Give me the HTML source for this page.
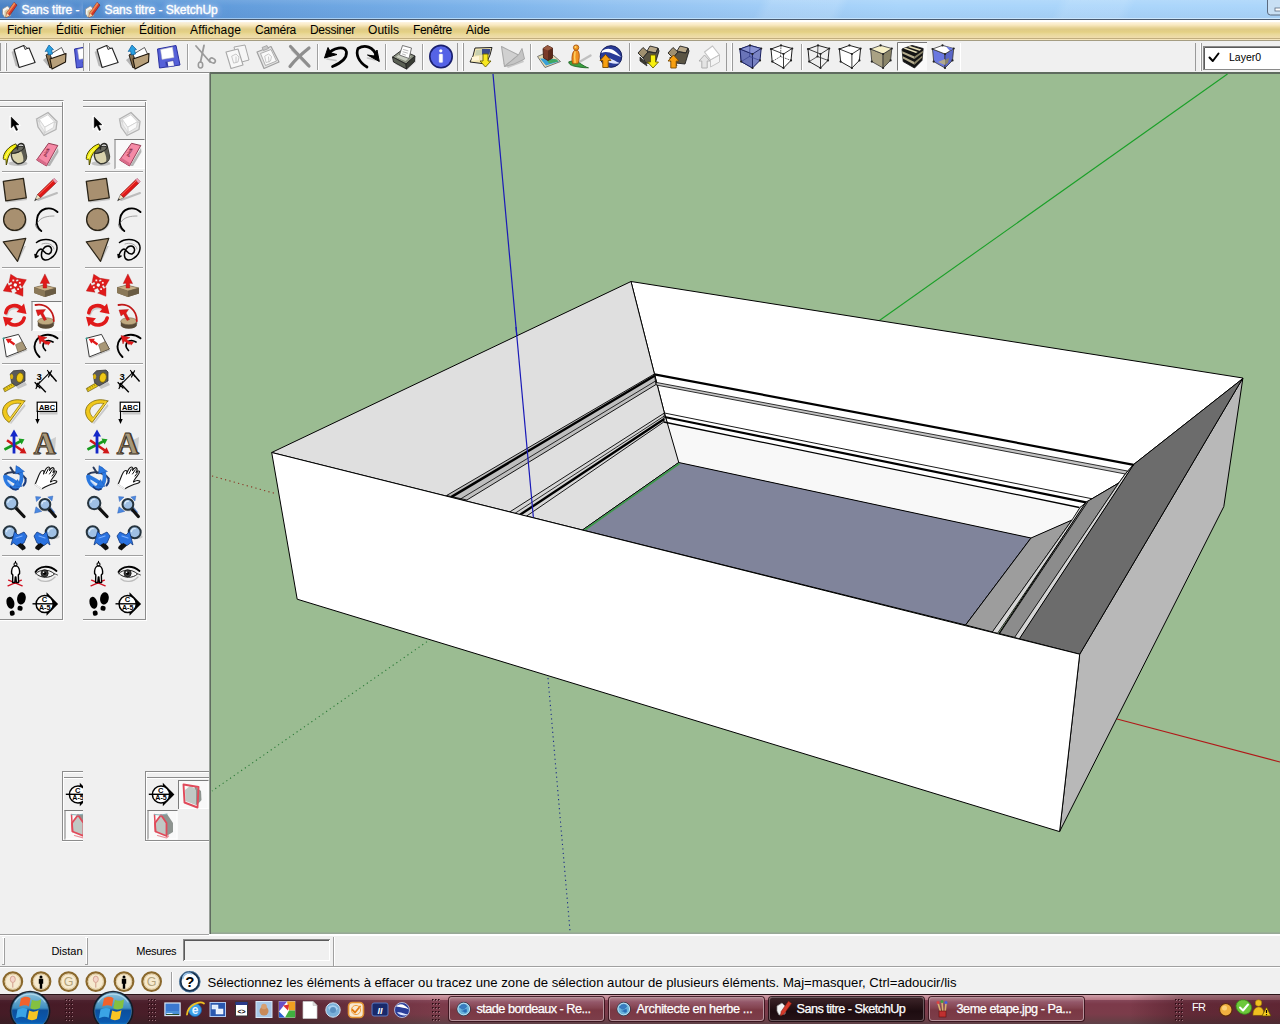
<!DOCTYPE html><html><head><meta charset="utf-8"><title>Sans titre - SketchUp</title><style>
html,body{margin:0;padding:0;}
body{width:1280px;height:1024px;overflow:hidden;position:relative;background:#f0f0f0;font-family:"Liberation Sans", "DejaVu Sans", sans-serif;font-size:12px;color:#000;}
.a{position:absolute;}
.t{position:absolute;white-space:nowrap;line-height:1;}
svg{position:absolute;overflow:visible;}
</style></head><body>
<svg width="1280" height="1024" viewBox="0 0 1280 1024" style="left:0;top:0"><rect x="209.4" y="72" width="1071" height="862" fill="#5f6b5f"/><rect x="211" y="74" width="1069" height="860" fill="#9bbc92"/><rect x="211" y="932.4" width="1069" height="1.6" fill="#98a997"/><line x1="1227.5" y1="74" x2="878" y2="321.5" stroke="#1aa028" stroke-width="1.1"/><line x1="493" y1="74" x2="533.5" y2="519" stroke="#1a1ab8" stroke-width="1.2"/><line x1="1117" y1="719" x2="1280" y2="762" stroke="#b01818" stroke-width="1.1"/><line x1="212" y1="476" x2="277" y2="494" stroke="#8a3020" stroke-width="1.1" stroke-dasharray="1.2 3.3"/><line x1="438" y1="634" x2="212" y2="791" stroke="#2a7a36" stroke-width="1.1" stroke-dasharray="1.2 3.3"/><line x1="548" y1="678" x2="570" y2="931" stroke="#1a2a8a" stroke-width="1.1" stroke-dasharray="1.2 3.3"/><polygon points="1079.7,654.2 1242.9,378 1223.8,506.6 1059.6,831.6" fill="#b8b8b8" stroke="#000" stroke-width="1" stroke-linejoin="round"/><polygon points="631,281.5 1242.9,378 1241,380 1133.75,464.4 1126,473 1118.75,483 1092,498.75 1080,507.5 1072,520 1031,538 678.75,462.5 664.4,413 654.4,373.8" fill="#ffffff" stroke="#000" stroke-width="1" stroke-linejoin="round"/><polygon points="663.75,422 1079.4,507.5 1072,520 1031,538 678.75,462.5" fill="#f8f8f8" stroke="none"/><polygon points="271.7,452.5 631,281.5 654.4,373.8 664.4,413 678.75,462.5 582.5,530" fill="#dfdfdf" stroke="#000" stroke-width="1" stroke-linejoin="round"/><polygon points="678.75,462.5 1031,538 965.6,625 582.5,530" fill="#80849b" stroke="#000" stroke-width="1" stroke-linejoin="round"/><polygon points="965.6,625 1031,538 1072,520 992.5,632" fill="#9d9d9d" stroke="#000" stroke-width="1" stroke-linejoin="round"/><polygon points="992.3,632 1072,520 1080,507.5 1086.5,502 997.6,633.2" fill="#d6d6d6" stroke="#000" stroke-width="0.8" stroke-linejoin="round"/><polygon points="999,633.5 1086,502 1092,498.75 1118.75,483 1015,637.5" fill="#8c8c8c" stroke="#000" stroke-width="1" stroke-linejoin="round"/><polygon points="1014.6,637.4 1118.75,483 1126,473 1133.75,464.4 1019.9,638.9" fill="#d6d6d6" stroke="#000" stroke-width="0.8" stroke-linejoin="round"/><polygon points="1019.4,638.75 1133.75,464.4 1241,380 1242.9,378 1079.7,654.2" fill="#6c6c6c" stroke="#000" stroke-width="1" stroke-linejoin="round"/><line x1="999.4" y1="633.8" x2="1088" y2="501.5" stroke="#000" stroke-width="0.9"/><line x1="679.5" y1="463.5" x2="584" y2="530.5" stroke="#3c9a4a" stroke-width="1.6"/><line x1="654.4" y1="374.3" x2="1133.75" y2="464.8" stroke="#000" stroke-width="2.2"/><polygon points="655.6,382.3 1127.5,471 1125.3,474 656.2,385" fill="#c4c4c4" stroke="#000" stroke-width="0.8"/><line x1="664.4" y1="413" x2="1092" y2="498.75" stroke="#000" stroke-width="0.9"/><line x1="664.6" y1="417" x2="1086" y2="502.3" stroke="#000" stroke-width="2.2"/><line x1="663.75" y1="422" x2="1079.4" y2="507.5" stroke="#000" stroke-width="1.3"/><polygon points="654.4,374 446.6,495.5 466.9,500 656,384.5" fill="#bebebe" stroke="#000" stroke-width="0.9"/><line x1="654.6" y1="375.7" x2="451.5" y2="496.9" stroke="#000" stroke-width="2.4"/><line x1="655.5" y1="381" x2="461" y2="498.7" stroke="#000" stroke-width="0.8"/><polygon points="664.4,413 509.8,511.9 526,516.5 663.75,422" fill="#d6d6d6" stroke="#000" stroke-width="0.9"/><line x1="664.3" y1="416" x2="515" y2="513.3" stroke="#000" stroke-width="0.8"/><line x1="664.2" y1="419" x2="520" y2="514.8" stroke="#000" stroke-width="2.4"/><line x1="516" y1="327" x2="533.5" y2="519" stroke="#1a1ab8" stroke-width="1.2"/><polygon points="271.7,452.5 297.2,599.2 1059.6,831.6 1079.7,654.2" fill="#ffffff" stroke="#000" stroke-width="1" stroke-linejoin="round"/></svg>
<div class="a" style="left:0px;top:0px;width:1280px;height:20px;background:linear-gradient(90deg,#4a82c6 0px,#548ed0 100px,#5f9ada 200px,#6aa3e0 300px,#74ace6 400px,#80b6ec 500px,#92c2f1 620px,#a0cdf7 760px,#a9d5fb 900px,#acd6fb 1280px);"></div><div class="a" style="left:0px;top:0px;width:1280px;height:18px;background:linear-gradient(180deg,rgba(255,255,255,.10) 0,rgba(255,255,255,0) 6px,rgba(0,20,80,.04) 17px);"></div><div class="a" style="left:0px;top:0px;width:1280px;height:18px;background:linear-gradient(115deg,rgba(255,255,255,0) 690px,rgba(255,255,255,.13) 700px,rgba(255,255,255,.13) 760px,rgba(255,255,255,0) 770px,rgba(255,255,255,0) 960px,rgba(255,255,255,.10) 970px,rgba(255,255,255,.10) 1020px,rgba(255,255,255,0) 1030px);"></div><div class="a" style="left:0px;top:18px;width:1280px;height:1px;background:linear-gradient(90deg,#8ab4e4 0,#b8dcfa 500px,#cfe8fd 1280px);"></div><div class="a" style="left:0px;top:19px;width:1280px;height:1px;background:#4a5a6e;"></div>
<div class="a" style="left:0px;top:20px;width:1280px;height:21px;background:linear-gradient(180deg,#ffffff 0,#ffffff 1.6px,#fdf3de 2.4px,#f8e8c0 5px,#e6d294 8px,#e0cc88 9.5px,#e4d084 12px,#e9d898 14px,#efdcaa 17.5px,#c2ae7e 18px,#c2ae7e 19px,#f6e6bc 19px,#f6e6bc 20px,#a59d82 20px,#a59d82 21px);"></div>
<div class="a" style="left:0px;top:72px;width:210px;height:1px;background:#8c8c8c;"></div><div class="a" style="left:0px;top:73px;width:209px;height:1px;background:#ffffff;"></div><div class="t" style="left:190px;top:23.6px;font-size:12px;letter-spacing:0.133px;">Affichage</div><div class="t" style="left:255px;top:23.6px;font-size:12px;letter-spacing:-0.283px;">Caméra</div><div class="t" style="left:310px;top:23.6px;font-size:12px;letter-spacing:-0.300px;">Dessiner</div><div class="t" style="left:368px;top:23.6px;font-size:12px;letter-spacing:0.050px;">Outils</div><div class="t" style="left:413px;top:23.6px;font-size:12px;letter-spacing:-0.343px;">Fenêtre</div><div class="t" style="left:466px;top:23.6px;font-size:12px;letter-spacing:0.000px;">Aide</div><svg width="1280" height="1024" viewBox="0 0 1280 1024" style="left:0;top:0"><line x1="187.5" y1="44" x2="187.5" y2="70" stroke="#a0a0a0" stroke-width="1" /><line x1="188.5" y1="44" x2="188.5" y2="70" stroke="#ffffff" stroke-width="1" /><path d="M196 46 L210 62" fill="none" stroke="#9a9a9a" stroke-width="1.8" stroke-linecap="round" stroke-linejoin="round" /><path d="M204 45.5 L200.5 62" fill="none" stroke="#9a9a9a" stroke-width="1.8" stroke-linecap="round" stroke-linejoin="round" /><ellipse cx="212.5" cy="60.5" rx="3" ry="2.2" fill="none" stroke="#9a9a9a" stroke-width="1.6" transform="rotate(30 212.5 60.5)"/><ellipse cx="200.5" cy="65" rx="2.2" ry="3" fill="none" stroke="#9a9a9a" stroke-width="1.6" /><polygon points="234,47 245,45 249,60 238,63" fill="#f6f6f6" stroke="#a8a8a8" stroke-width="1" stroke-linejoin="round" /><polygon points="226,52 238,49 243,65 231,68.5" fill="#f8f8f8" stroke="#a8a8a8" stroke-width="1.1" stroke-linejoin="round" /><path d="M232 56 l4 -2 l3 3 l-1 5 l-4 1 z M236 57 v5" fill="none" stroke="#bcbcbc" stroke-width="0.8" stroke-linecap="round" stroke-linejoin="round" /><polygon points="257,52 271,46.5 279,62 264,68.5" fill="#e4e4e4" stroke="#a0a0a0" stroke-width="1.2" stroke-linejoin="round" /><polygon points="260.5,53.5 271,49.5 276.5,61 265.5,65.5" fill="#fafafa" stroke="#a0a0a0" stroke-width="0.8" stroke-linejoin="round" /><polygon points="262,47.5 267,45.5 268.5,48.5 263.5,50.5" fill="#c8c8c8" stroke="#a0a0a0" stroke-width="0.8" stroke-linejoin="round" /><path d="M265 56 l3.5 -2 l3 2.5 l-1 4.5 l-4 1.5 z M268.5 57 l0.5 5" fill="none" stroke="#bcbcbc" stroke-width="0.8" stroke-linecap="round" stroke-linejoin="round" /><path d="M291.5 50 L307.5 66" fill="none" stroke="#c8c8c8" stroke-width="1.6" stroke-linecap="round" stroke-linejoin="round" /><path d="M290.5 46.5 C296.5 53 302.5 59 309 66" fill="none" stroke="#8e8e8e" stroke-width="3.2" stroke-linecap="round" stroke-linejoin="round" /><path d="M309 48 C301.5 54 295.5 59 290 66.5" fill="none" stroke="#8e8e8e" stroke-width="3.2" stroke-linecap="round" stroke-linejoin="round" /><line x1="317.5" y1="44" x2="317.5" y2="70" stroke="#a0a0a0" stroke-width="1" /><line x1="318.5" y1="44" x2="318.5" y2="70" stroke="#ffffff" stroke-width="1" /><path d="M327 59 L336 60.5" fill="none" stroke="#999" stroke-width="1.6" stroke-linecap="round" stroke-linejoin="round" opacity="0.5"/><path d="M332.5 66.5 C341 63 347 58 346.5 52 C345 45.5 333 47 327 55.5" fill="none" stroke="#000" stroke-width="2.7" stroke-linecap="round" stroke-linejoin="round" /><polygon points="324.5,58 328,47.5 331,53 337,54.5" fill="#000" stroke="#000" stroke-width="1" stroke-linejoin="round" /><path d="M367.5 58 L375.5 60" fill="none" stroke="#999" stroke-width="1.6" stroke-linecap="round" stroke-linejoin="round" opacity="0.5"/><path d="M367 67 C358.5 62 355.5 54 358 48.5 C364.5 44.5 373.5 46 377 57" fill="none" stroke="#000" stroke-width="2.7" stroke-linecap="round" stroke-linejoin="round" /><polygon points="379.3,61.5 377,50 374,56 367.5,55" fill="#000" stroke="#000" stroke-width="1" stroke-linejoin="round" /><line x1="385.5" y1="44" x2="385.5" y2="70" stroke="#a0a0a0" stroke-width="1" /><line x1="386.5" y1="44" x2="386.5" y2="70" stroke="#ffffff" stroke-width="1" /><polygon points="395,64 407,70 416,62 415,58" fill="#999" stroke="none" stroke-width="1" stroke-linejoin="round" opacity="0.4"/><polygon points="392.5,57 402,50 415,56 406,64" fill="#8e9484" stroke="#222" stroke-width="0.9" stroke-linejoin="round" /><polygon points="392.5,57 406,64 406.5,69 393.5,62" fill="#5a6054" stroke="#222" stroke-width="0.9" stroke-linejoin="round" /><polygon points="406,64 415,56 414.5,61.5 406.5,69" fill="#3a3e36" stroke="#222" stroke-width="0.9" stroke-linejoin="round" /><polygon points="396,57 402,52.5 411,56.5 405.5,61" fill="#c8ccc0" stroke="none" stroke-width="1" stroke-linejoin="round" /><polygon points="399.5,55 402.5,45.5 411.5,48 409,58.5" fill="#ffffff" stroke="#555" stroke-width="0.8" stroke-linejoin="round" /><path d="M403.5 49.5 l4.5 1.3 M403 51.8 l4.5 1.3 M402.5 54 l3 1" fill="none" stroke="#999" stroke-width="0.7" stroke-linecap="round" stroke-linejoin="round" /><line x1="422.5" y1="44" x2="422.5" y2="70" stroke="#a0a0a0" stroke-width="1" /><line x1="423.5" y1="44" x2="423.5" y2="70" stroke="#ffffff" stroke-width="1" /><circle cx="441" cy="56.6" r="11.2" fill="#5563e6" stroke="#1a2070" stroke-width="1.6" /><circle cx="440.8" cy="50.8" r="1.6" fill="#ffffff" stroke="none" stroke-width="1" /><rect x="439.1" y="54" width="3.6" height="8.5" fill="#ffffff" stroke="#dde" stroke-width="0.4" rx="0.8"/><line x1="457.5" y1="43" x2="457.5" y2="71" stroke="#9a9a9a" stroke-width="1" /><line x1="462.5" y1="43" x2="462.5" y2="71" stroke="#ffffff" stroke-width="1" /><line x1="463.5" y1="43" x2="463.5" y2="71" stroke="#9a9a9a" stroke-width="1" /><polygon points="475,48 492,47.5 490,55 486,64 470,62 473,56" fill="#f3e6b0" stroke="#222" stroke-width="1" stroke-linejoin="round" /><polygon points="482,49 490.5,49 489.5,54.5 482,54.5" fill="#3a4a8a" stroke="none" stroke-width="1" stroke-linejoin="round" /><polygon points="476,50 482,49.5 482,55 475,55.5" fill="#c8d0b0" stroke="none" stroke-width="1" stroke-linejoin="round" /><polygon points="472,57 479,56 479,60 471.5,61" fill="#fff6d8" stroke="none" stroke-width="1" stroke-linejoin="round" /><polygon points="483,54 488,54 488,61 491,61 485.5,67 480,61 483,61" fill="#f8e820" stroke="#6a6000" stroke-width="0.9" stroke-linejoin="round" /><polygon points="503,63 522,58 524,62 508,68" fill="#c8c8c8" stroke="none" stroke-width="1" stroke-linejoin="round" /><polygon points="501.5,46.5 518.5,55 504.5,66.5" fill="#d0d0d0" stroke="#a8a8a8" stroke-width="1.1" stroke-linejoin="round" /><polygon points="518.5,55 522,48.5 524.5,59 514,64 504.5,66.5" fill="#c4c4c4" stroke="#a8a8a8" stroke-width="1" stroke-linejoin="round" /><line x1="530.5" y1="44" x2="530.5" y2="70" stroke="#a0a0a0" stroke-width="1" /><line x1="531.5" y1="44" x2="531.5" y2="70" stroke="#ffffff" stroke-width="1" /><polygon points="537.5,56.5 549,51.5 560.5,61.5 545,67.5" fill="#e8dcb0" stroke="#666" stroke-width="0.9" stroke-linejoin="round" /><polygon points="540,58.5 546,65.5 559,61.5 555,59" fill="#38a0d8" stroke="none" stroke-width="1" stroke-linejoin="round" /><polygon points="546,59 557,59.5 558,61.5 549,63.5" fill="#40a860" stroke="none" stroke-width="1" stroke-linejoin="round" /><polygon points="543,48.5 547.5,45.5 552.5,48 552.5,58 548,60.5 543.5,58" fill="#7a3a28" stroke="#3a1a10" stroke-width="0.8" stroke-linejoin="round" /><polygon points="548,50.5 552.5,48 552.5,58 548,60.5" fill="#5a2a1c" stroke="none" stroke-width="1" stroke-linejoin="round" /><polygon points="543,48.5 547.5,45.5 552.5,48 548,50.5" fill="#9a5a40" stroke="none" stroke-width="1" stroke-linejoin="round" /><path d="M578.5 62.5 L590.5 55.5" fill="none" stroke="#999" stroke-width="2.4" stroke-linecap="round" stroke-linejoin="round" opacity="0.55"/><path d="M569 62 C571.5 60 576.5 61 579.5 63 C582.5 65 586.5 67.5 588.5 67.8 C584.5 68 577.5 67 573.5 66 C570.5 65 568.5 64 569 62 Z" fill="#3aa040" stroke="#1a6020" stroke-width="0.8" stroke-linecap="round" stroke-linejoin="round" /><path d="M572.5 63.5 C571.5 60 571.8 54 573.5 51.5 C574.7 49.5 577.7 49.5 578.5 51.5 C579.8 54 579.5 60 578 63.5 z" fill="#f09020" stroke="#a04a08" stroke-width="0.8" stroke-linecap="round" stroke-linejoin="round" /><circle cx="576.1" cy="47.6" r="2.7" fill="#f09820" stroke="#a04a08" stroke-width="0.8" /><path d="M575 52 C574.5 55 574.5 59 575.1 62.5" fill="none" stroke="#ffd060" stroke-width="1.5" stroke-linecap="round" stroke-linejoin="round" /><circle cx="575.5" cy="47" r="1" fill="#ffd870" stroke="none" stroke-width="1" /><circle cx="611" cy="56.5" r="10.8" fill="#2a3c98" stroke="#161e5a" stroke-width="1" /><path d="M602 51 C609 46 615 50 621 57 C615 55 608 50 601.5 53 z" fill="#ffffff" stroke="none" stroke-width="1" stroke-linecap="round" stroke-linejoin="round" /><path d="M605 58 C611 57 615 62 620 63 C615 65 609 62 604 62 z" fill="#dfe6ff" stroke="none" stroke-width="1" stroke-linecap="round" stroke-linejoin="round" /><polygon points="605.5,54.5 611,60.5 608.2,60.5 608.2,67.5 602.8,67.5 602.8,60.5 600,60.5" fill="#f8a010" stroke="#7a4a00" stroke-width="0.9" stroke-linejoin="round" /><line x1="629.5" y1="43" x2="629.5" y2="71" stroke="#9a9a9a" stroke-width="1" /><line x1="630.5" y1="43" x2="630.5" y2="71" stroke="#fff" stroke-width="1" /><polygon points="638,53 643,47.5 648,52 643,58" fill="#a09070" stroke="#222" stroke-width="0.9" stroke-linejoin="round" /><polygon points="647,51 650,46 658,48 656,53" fill="#b8a888" stroke="#222" stroke-width="0.9" stroke-linejoin="round" /><polygon points="643,58 648,52 656,53 658,48 659,51 655,64 646,63" fill="#5a5444" stroke="#222" stroke-width="0.9" stroke-linejoin="round" /><polygon points="640,57 646,63 647,66 640,61" fill="#3a3830" stroke="#222" stroke-width="0.7" stroke-linejoin="round" /><polygon points="650.5,55 655.5,55 655.5,62 658.5,62 653,68 647.5,62 650.5,62" fill="#f8f010" stroke="#6a6000" stroke-width="0.9" stroke-linejoin="round" /><polygon points="668,53 673,47.5 678,52 673,58" fill="#a09070" stroke="#222" stroke-width="0.9" stroke-linejoin="round" /><polygon points="677,51 680,46 688,48 686,53" fill="#b8a888" stroke="#222" stroke-width="0.9" stroke-linejoin="round" /><polygon points="673,58 678,52 686,53 688,48 689,51 685,64 676,63" fill="#5a5444" stroke="#222" stroke-width="0.9" stroke-linejoin="round" /><polygon points="670,57 676,63 677,66 670,61" fill="#3a3830" stroke="#222" stroke-width="0.7" stroke-linejoin="round" /><polygon points="673.5,55 679,61 676.2,61 676.2,68 670.8,68 670.8,61 668,61" fill="#f8a010" stroke="#7a4a00" stroke-width="0.9" stroke-linejoin="round" /><polygon points="704.5,52 712.5,46 719.5,55 710.5,60" fill="#ffffff" stroke="#c4c4c4" stroke-width="1.2" stroke-linejoin="round" /><polygon points="710.5,60 719.5,55 719.5,62 710.5,67" fill="#f4f4f4" stroke="#c4c4c4" stroke-width="1" stroke-linejoin="round" /><polygon points="704.5,55 710,61 707.2,61 707.2,68 701.8,68 701.8,61 699,61" fill="#e4e4e4" stroke="#b0b0b0" stroke-width="1" stroke-linejoin="round" /><line x1="726.5" y1="43" x2="726.5" y2="71" stroke="#9a9a9a" stroke-width="1" /><line x1="731.5" y1="43" x2="731.5" y2="71" stroke="#ffffff" stroke-width="1" /><line x1="732.5" y1="43" x2="732.5" y2="71" stroke="#9a9a9a" stroke-width="1" /><rect x="897.5" y="42.5" width="29.5" height="28" fill="#fafafa" stroke="none" stroke-width="1" /><line x1="897.5" y1="42.5" x2="927" y2="42.5" stroke="#777" stroke-width="1" /><line x1="897.5" y1="42.5" x2="897.5" y2="70.5" stroke="#777" stroke-width="1" /><polygon points="750,45.4 761.2,48.5 760,60.4 752.5,68 741.2,61.6 740,49" fill="#7a84c4" stroke="#1a2060" stroke-width="1" stroke-linejoin="round" /><polygon points="740,49 752.5,54 752.5,68 741.2,61.6" fill="#6a74b8" stroke="#1a2060" stroke-width="0.9" stroke-linejoin="round" /><polygon points="750,45.4 761.2,48.5 752.5,54 740,49" fill="#8a94d4" stroke="#1a2060" stroke-width="0.9" stroke-linejoin="round" /><path d="M749.5 56.5 L750 45.4 M749.5 56.5 L741.2 61.6 M749.5 56.5 L760 60.4" fill="none" stroke="#3a4490" stroke-width="0.7" stroke-linecap="round" stroke-linejoin="round" /><circle cx="750" cy="45.4" r="1.1" fill="#222" stroke="none" stroke-width="1" /><circle cx="740" cy="49" r="1.1" fill="#222" stroke="none" stroke-width="1" /><circle cx="761.2" cy="48.5" r="1.1" fill="#222" stroke="none" stroke-width="1" /><circle cx="752.5" cy="54" r="1.1" fill="#222" stroke="none" stroke-width="1" /><circle cx="752.5" cy="68" r="1.1" fill="#222" stroke="none" stroke-width="1" /><circle cx="741.2" cy="61.6" r="1.1" fill="#222" stroke="none" stroke-width="1" /><circle cx="760" cy="60.4" r="1.1" fill="#222" stroke="none" stroke-width="1" /><polygon points="781,45.4 792.2,48.5 791,60.4 783.5,68 772.2,61.6 771,49" fill="#ffffff" stroke="#222" stroke-width="1" stroke-linejoin="round" /><path d="M771 49 L783.5 54 L792.2 48.5 M783.5 54 L783.5 68" fill="none" stroke="#222" stroke-width="0.9" stroke-linecap="round" stroke-linejoin="round" /><path d="M780.5 56.5 L781 45.4 M780.5 56.5 L772.2 61.6 M780.5 56.5 L791 60.4" fill="none" stroke="#444" stroke-width="0.8" stroke-linecap="round" stroke-linejoin="round" stroke-dasharray="1 1.6"/><circle cx="781" cy="45.4" r="1.1" fill="#222" stroke="none" stroke-width="1" /><circle cx="771" cy="49" r="1.1" fill="#222" stroke="none" stroke-width="1" /><circle cx="792.2" cy="48.5" r="1.1" fill="#222" stroke="none" stroke-width="1" /><circle cx="783.5" cy="54" r="1.1" fill="#222" stroke="none" stroke-width="1" /><circle cx="783.5" cy="68" r="1.1" fill="#222" stroke="none" stroke-width="1" /><circle cx="772.2" cy="61.6" r="1.1" fill="#222" stroke="none" stroke-width="1" /><circle cx="791" cy="60.4" r="1.1" fill="#222" stroke="none" stroke-width="1" /><line x1="801.5" y1="44" x2="801.5" y2="70" stroke="#a0a0a0" stroke-width="1" /><line x1="802.5" y1="44" x2="802.5" y2="70" stroke="#ffffff" stroke-width="1" /><polygon points="818,45.4 829.2,48.5 828,60.4 820.5,68 809.2,61.6 808,49" fill="none" stroke="#222" stroke-width="1" stroke-linejoin="round" /><path d="M808 49 L820.5 54 L829.2 48.5 M820.5 54 L820.5 68" fill="none" stroke="#222" stroke-width="0.9" stroke-linecap="round" stroke-linejoin="round" /><path d="M817.5 56.5 L818 45.4 M817.5 56.5 L809.2 61.6 M817.5 56.5 L828 60.4" fill="none" stroke="#333" stroke-width="0.8" stroke-linecap="round" stroke-linejoin="round" /><circle cx="818" cy="45.4" r="1.1" fill="#222" stroke="none" stroke-width="1" /><circle cx="808" cy="49" r="1.1" fill="#222" stroke="none" stroke-width="1" /><circle cx="829.2" cy="48.5" r="1.1" fill="#222" stroke="none" stroke-width="1" /><circle cx="820.5" cy="54" r="1.1" fill="#222" stroke="none" stroke-width="1" /><circle cx="820.5" cy="68" r="1.1" fill="#222" stroke="none" stroke-width="1" /><circle cx="809.2" cy="61.6" r="1.1" fill="#222" stroke="none" stroke-width="1" /><circle cx="828" cy="60.4" r="1.1" fill="#222" stroke="none" stroke-width="1" /><circle cx="817.5" cy="56.5" r="1.1" fill="#222" stroke="none" stroke-width="1" /><polygon points="849.4,45.4 860.6,48.5 859.4,60.4 851.9,68 840.6,61.6 839.4,49" fill="#ffffff" stroke="#222" stroke-width="1" stroke-linejoin="round" /><path d="M839.4 49 L851.9 54 L860.6 48.5 M851.9 54 L851.9 68" fill="none" stroke="#222" stroke-width="0.9" stroke-linecap="round" stroke-linejoin="round" /><circle cx="849.4" cy="45.4" r="1.1" fill="#222" stroke="none" stroke-width="1" /><circle cx="839.4" cy="49" r="1.1" fill="#222" stroke="none" stroke-width="1" /><circle cx="860.6" cy="48.5" r="1.1" fill="#222" stroke="none" stroke-width="1" /><circle cx="851.9" cy="54" r="1.1" fill="#222" stroke="none" stroke-width="1" /><circle cx="851.9" cy="68" r="1.1" fill="#222" stroke="none" stroke-width="1" /><circle cx="840.6" cy="61.6" r="1.1" fill="#222" stroke="none" stroke-width="1" /><circle cx="859.4" cy="60.4" r="1.1" fill="#222" stroke="none" stroke-width="1" /><polygon points="870.6,49 883.1,54 883.1,68 871.8,61.6" fill="#aaa284" stroke="#333" stroke-width="0.8" stroke-linejoin="round" /><polygon points="883.1,54 891.8,48.5 890.6,60.4 883.1,68" fill="#8a8468" stroke="#333" stroke-width="0.8" stroke-linejoin="round" /><polygon points="880.6,45.4 891.8,48.5 883.1,54 870.6,49" fill="#f6efc6" stroke="#333" stroke-width="0.8" stroke-linejoin="round" /><circle cx="880.6" cy="45.4" r="1.1" fill="#222" stroke="none" stroke-width="1" /><circle cx="870.6" cy="49" r="1.1" fill="#222" stroke="none" stroke-width="1" /><circle cx="891.8" cy="48.5" r="1.1" fill="#222" stroke="none" stroke-width="1" /><circle cx="883.1" cy="54" r="1.1" fill="#222" stroke="none" stroke-width="1" /><circle cx="883.1" cy="68" r="1.1" fill="#222" stroke="none" stroke-width="1" /><circle cx="871.8" cy="61.6" r="1.1" fill="#222" stroke="none" stroke-width="1" /><circle cx="890.6" cy="60.4" r="1.1" fill="#222" stroke="none" stroke-width="1" /><polygon points="912,45.4 923.2,48.5 922,60.4 914.5,68 903.2,61.6 902,49" fill="#141414" stroke="#111" stroke-width="0.8" stroke-linejoin="round" /><polygon points="902.216,51.268 914.5,56.52 914.5,59.04 902.432,53.536" fill="#b4ac8e" stroke="none" stroke-width="1" stroke-linejoin="round" /><polygon points="914.5,56.52 922.984,50.642 922.768,52.784 914.5,59.04" fill="#8a8468" stroke="none" stroke-width="1" stroke-linejoin="round" /><polygon points="902.696,56.308 914.5,62.12 914.5,64.64 902.912,58.576" fill="#b4ac8e" stroke="none" stroke-width="1" stroke-linejoin="round" /><polygon points="914.5,62.12 922.504,55.402 922.288,57.544 914.5,64.64" fill="#8a8468" stroke="none" stroke-width="1" stroke-linejoin="round" /><polygon points="910,46.12 921.46,49.6 919.546,50.81 907.8,46.912" fill="#e6dfb8" stroke="none" stroke-width="1" stroke-linejoin="round" /><polygon points="905.8,47.632 917.806,51.91 915.892,53.12 903.6,48.424" fill="#e6dfb8" stroke="none" stroke-width="1" stroke-linejoin="round" /><polygon points="932.5,49 945,54 945,68 933.7,61.6" fill="#6a78e0" stroke="#333" stroke-width="0.8" stroke-linejoin="round" /><polygon points="945,54 953.7,48.5 952.5,60.4 945,68" fill="#5a66c8" stroke="#333" stroke-width="0.8" stroke-linejoin="round" /><polygon points="942.5,45.4 953.7,48.5 945,54 932.5,49" fill="#ffffff" stroke="#333" stroke-width="0.8" stroke-linejoin="round" /><polygon points="942.5,45.4 953.7,48.5 949.7,50.7 945.5,46" fill="#6a78e0" stroke="none" stroke-width="1" stroke-linejoin="round" /><polygon points="938,62 945,59 945,65 940,63" fill="#b0a890" stroke="none" stroke-width="1" stroke-linejoin="round" /><polygon points="945,60 949,58 948,63 945,65" fill="#8a8468" stroke="none" stroke-width="1" stroke-linejoin="round" /><circle cx="942.5" cy="45.4" r="1.1" fill="#222" stroke="none" stroke-width="1" /><circle cx="932.5" cy="49" r="1.1" fill="#222" stroke="none" stroke-width="1" /><circle cx="953.7" cy="48.5" r="1.1" fill="#222" stroke="none" stroke-width="1" /><circle cx="945" cy="54" r="1.1" fill="#222" stroke="none" stroke-width="1" /><circle cx="945" cy="68" r="1.1" fill="#222" stroke="none" stroke-width="1" /><circle cx="933.7" cy="61.6" r="1.1" fill="#222" stroke="none" stroke-width="1" /><circle cx="952.5" cy="60.4" r="1.1" fill="#222" stroke="none" stroke-width="1" /><line x1="960.5" y1="43" x2="960.5" y2="71" stroke="#ffffff" stroke-width="1" /><line x1="1195.5" y1="43" x2="1195.5" y2="71" stroke="#9a9a9a" stroke-width="1" /><line x1="1200.5" y1="43" x2="1200.5" y2="71" stroke="#ffffff" stroke-width="1" /><line x1="1201.5" y1="43" x2="1201.5" y2="71" stroke="#9a9a9a" stroke-width="1" /><rect x="1203.5" y="46.5" width="80" height="23" fill="#ffffff" stroke="#8a8a8a" stroke-width="1" /><line x1="1204.5" y1="47.5" x2="1280" y2="47.5" stroke="#5a5a5a" stroke-width="1" /><line x1="1204.5" y1="47.5" x2="1204.5" y2="69" stroke="#5a5a5a" stroke-width="1" /><path d="M1209.5 57.5 L1212.8 61 L1218.5 53.5" fill="none" stroke="#000" stroke-width="2" stroke-linecap="round" stroke-linejoin="round" /><rect x="1267.5" y="-3" width="16" height="18" fill="#c8dff4" stroke="#5a6a80" stroke-width="1" rx="3"/><rect x="1275" y="8" width="8" height="3" fill="#ffffff" stroke="#5a6a80" stroke-width="0.8" /></svg><div class="t" style="left:1229px;top:51.5px;font-size:10.5px;">Layer0</div><div class="a" style="left:0px;top:934px;width:209px;height:1px;background:#a4a4a4;"></div><div class="a" style="left:0px;top:935px;width:209px;height:1px;background:#ffffff;"></div><div class="a" style="left:209px;top:934px;width:1071px;height:2px;background:#ffffff;"></div><div class="a" style="left:0px;top:966px;width:1280px;height:1px;background:#a0a0a0;"></div><div class="a" style="left:0px;top:967px;width:1280px;height:1px;background:#ffffff;"></div><div class="a" style="left:0px;top:994px;width:1280px;height:30px;background:linear-gradient(180deg,#2a1418 0,#2a1418 1px,#d0a0aa 1px,#b87a86 5.5px,#86485a 6px,#7c3a4a 10px,#7b3c4a 20px,#6a3e46 26px,#5e4248 30px);"></div><div class="a" style="left:0px;top:995px;width:1280px;height:29px;background:linear-gradient(90deg,rgba(25,0,8,.55) 0,rgba(25,0,8,.5) 160px,rgba(25,0,8,.32) 300px,rgba(25,0,8,0) 440px,rgba(25,0,8,0) 1130px,rgba(40,0,10,.3) 1180px,rgba(40,0,10,.35) 1280px);"></div><div class="a" style="left:448.5px;top:996.5px;width:155px;height:24.5px;background:linear-gradient(180deg,#ae808a 0,#94586a 18%,#844450 45%,#7a3844 55%,#7c3e4a 100%);border:1px solid #b8949c;border-radius:3px;box-sizing:border-box;box-shadow:0 0 0 1px rgba(50,15,25,.85);"></div><div class="t" style="left:476.5px;top:1003.2px;color:#fff;font-size:12.7px;letter-spacing:-0.528px;-webkit-text-stroke:0.25px #fff;">stade bordeaux - Re...</div><div class="a" style="left:608.5px;top:996.5px;width:155px;height:24.5px;background:linear-gradient(180deg,#ae808a 0,#94586a 18%,#844450 45%,#7a3844 55%,#7c3e4a 100%);border:1px solid #b8949c;border-radius:3px;box-sizing:border-box;box-shadow:0 0 0 1px rgba(50,15,25,.85);"></div><div class="t" style="left:636.5px;top:1003.2px;color:#fff;font-size:12.7px;letter-spacing:-0.359px;-webkit-text-stroke:0.25px #fff;">Architecte en herbe ...</div><div class="a" style="left:768.5px;top:996.5px;width:155px;height:24.5px;background:linear-gradient(180deg,#3c2429 0,#2a1519 35%,#1d0c10 60%,#241216 100%);border:1px solid #6a5a5e;border-radius:3px;box-sizing:border-box;box-shadow:0 0 0 1px rgba(20,5,10,.8);"></div><div class="t" style="left:796.5px;top:1003.2px;color:#fff;font-size:12.7px;letter-spacing:-0.525px;-webkit-text-stroke:0.25px #fff;">Sans titre - SketchUp</div><div class="a" style="left:928.5px;top:996.5px;width:155px;height:24.5px;background:linear-gradient(180deg,#ae808a 0,#94586a 18%,#844450 45%,#7a3844 55%,#7c3e4a 100%);border:1px solid #b8949c;border-radius:3px;box-sizing:border-box;box-shadow:0 0 0 1px rgba(50,15,25,.85);"></div><div class="t" style="left:956.5px;top:1003.2px;color:#fff;font-size:12.7px;letter-spacing:-0.454px;-webkit-text-stroke:0.25px #fff;">3eme etape.jpg - Pa...</div><div class="t" style="left:1192px;top:1001.5px;color:#fff;font-size:11px;letter-spacing:-0.6px;">FR</div><div class="t" style="left:207.5px;top:975.6px;font-size:13.14px;">Sélectionnez les éléments à effacer ou tracez une zone de sélection autour de plusieurs éléments. Maj=masquer, Ctrl=adoucir/lis</div><svg width="1280" height="1024" viewBox="0 0 1280 1024" style="left:0;top:0"><line x1="171.5" y1="972" x2="171.5" y2="992" stroke="#a0a0a0" stroke-width="1" /><line x1="172.5" y1="972" x2="172.5" y2="992" stroke="#fff" stroke-width="1" /><circle cx="189.8" cy="981.7" r="9.4" fill="#ffffff" stroke="#17324e" stroke-width="2.4" /><circle cx="189.8" cy="981.7" r="10.4" fill="none" stroke="#6a9ac8" stroke-width="0.6" /><path d="M182.8 978.7 A6 6 0 0 1 191.8 973.9" fill="none" stroke="#9cc4e8" stroke-width="1.6" stroke-linecap="round" stroke-linejoin="round" /><text x="189.8" y="986.9" font-size="15" font-family="Liberation Sans, DejaVu Sans, sans-serif" text-anchor="middle" font-weight="bold">?</text><line x1="333.5" y1="937" x2="333.5" y2="966" stroke="#a0a0a0" stroke-width="1" /><line x1="334.5" y1="937" x2="334.5" y2="966" stroke="#fff" stroke-width="1" /><rect x="183.5" y="939.5" width="146" height="21" fill="#f0f0f0" stroke="#8a8a8a" stroke-width="1" /><line x1="184" y1="940.5" x2="329" y2="940.5" stroke="#5a5a5a" stroke-width="1" /><line x1="184.5" y1="940" x2="184.5" y2="960" stroke="#5a5a5a" stroke-width="1" /><line x1="184" y1="960.5" x2="330" y2="960.5" stroke="#fff" stroke-width="1" /><line x1="329.5" y1="940" x2="329.5" y2="961" stroke="#fff" stroke-width="1" /><g transform="translate(0,1.5)" ><rect x="164.9" y="1001.5" width="15.2" height="12.6" fill="#3a78d0" stroke="#d8e4f4" stroke-width="1.2" /><rect x="166" y="1009.5" width="13" height="3.6" fill="#4a90d8" stroke="none" stroke-width="1" /><rect x="166.5" y="1011.5" width="6" height="1.2" fill="#d0e8ff" stroke="none" stroke-width="1" /><rect x="166" y="1012.5" width="13" height="1" fill="#2a4a2a" stroke="none" stroke-width="1" /><circle cx="195" cy="1008.5" r="6.5" fill="#3aa0e8" stroke="#1a5aa8" stroke-width="0.8" /><text x="195" y="1012.6" font-size="12" font-family="Liberation Sans, DejaVu Sans, sans-serif" text-anchor="middle" fill="#e8f4ff" font-weight="bold">e</text><path d="M187 1013 C188 1003 200 999 204 1002" fill="none" stroke="#f0c020" stroke-width="1.8" stroke-linecap="round" stroke-linejoin="round" /><rect x="210" y="1001" width="15.5" height="14" fill="#2a58b0" stroke="#b0c8f0" stroke-width="1" /><rect x="212" y="1003.5" width="6" height="4" fill="#d8e8ff" stroke="#fff" stroke-width="0.5" /><rect x="216" y="1007.5" width="7" height="5" fill="#e8f0ff" stroke="#fff" stroke-width="0.5" /><rect x="235.5" y="1000.5" width="12" height="14" fill="#ffffff" stroke="#333" stroke-width="1" /><rect x="235.5" y="1000.5" width="12" height="3" fill="#2a3a8a" stroke="none" stroke-width="1" /><text x="241.5" y="1012" font-size="7" font-family="Liberation Sans, DejaVu Sans, sans-serif" text-anchor="middle" font-weight="bold">&lt;&gt;</text><rect x="256" y="1000" width="16" height="16" fill="#a8c8e8" stroke="#d8e8f8" stroke-width="1" /><circle cx="264" cy="1009.5" r="4.5" fill="#c88a5a" stroke="none" stroke-width="1" /><circle cx="264" cy="1005" r="2.8" fill="#d8a070" stroke="none" stroke-width="1" /><rect x="279" y="1000" width="16" height="16" fill="#ffffff" stroke="#ddd" stroke-width="0.6" /><polygon points="279,1000 287,1000 279,1010" fill="#6a50c8" stroke="none" stroke-width="1" stroke-linejoin="round" /><polygon points="287,1000 295,1000 295,1009 289,1009" fill="#f0a020" stroke="none" stroke-width="1" stroke-linejoin="round" /><polygon points="289,1009 295,1009 295,1016 285,1016" fill="#40b040" stroke="none" stroke-width="1" stroke-linejoin="round" /><polygon points="279,1010 285,1016 279,1016" fill="#2a60d0" stroke="none" stroke-width="1" stroke-linejoin="round" /><polygon points="283,1004 289,1003 288,1009" fill="#e03030" stroke="none" stroke-width="1" stroke-linejoin="round" /><polygon points="303,1000 313,1000 317,1004 317,1017 303,1017" fill="#ffffff" stroke="#ccc" stroke-width="0.7" stroke-linejoin="round" /><polygon points="313,1000 313,1004 317,1004" fill="#ddd" stroke="#bbb" stroke-width="0.5" stroke-linejoin="round" /><circle cx="333" cy="1008.5" r="7.2" fill="#7ab0d8" stroke="#d0e0f0" stroke-width="1" /><path d="M328 1006 c3 -3 7 -3 10 1 c-2 3 -7 5 -10 -1z" fill="#a8d0f0" stroke="none" stroke-width="1" stroke-linecap="round" stroke-linejoin="round" /><circle cx="333" cy="1008.5" r="3" fill="#5a90c0" stroke="none" stroke-width="1" /><rect x="348.5" y="1001" width="15" height="15" fill="#f8e8d0" stroke="#e09030" stroke-width="1.6" rx="4"/><path d="M352 1008 l3 3 l5 -6" fill="none" stroke="#e07a10" stroke-width="1.8" stroke-linecap="round" stroke-linejoin="round" /><circle cx="356" cy="1008.5" r="4.6" fill="none" stroke="#f0a040" stroke-width="1" /><rect x="372" y="1001.5" width="16" height="13" fill="#1a2a6a" stroke="#5a78c0" stroke-width="1" rx="2"/><text x="380" y="1012" font-size="9" font-family="Liberation Sans, DejaVu Sans, sans-serif" text-anchor="middle" fill="#fff" font-weight="bold" font-style="italic">II</text><circle cx="402" cy="1008.5" r="7.5" fill="#2a3c98" stroke="#c8d0e8" stroke-width="0.8" /><path d="M396 1005 c4 -4 9 -2 13 3 c-4 -2 -8 -2 -13 -3z" fill="#fff" stroke="none" stroke-width="1" stroke-linecap="round" stroke-linejoin="round" /><path d="M397 1011 c4 -1 7 2 11 2 c-3 2 -8 1 -11 -2z" fill="#dfe6ff" stroke="none" stroke-width="1" stroke-linecap="round" stroke-linejoin="round" /></g><rect x="432" y="999" width="1.7" height="1.7" fill="#2a0c14" stroke="none" stroke-width="1" /><rect x="432.9" y="999.9" width="1" height="1" fill="#b88a94" stroke="none" stroke-width="1" /><rect x="435" y="999" width="1.7" height="1.7" fill="#2a0c14" stroke="none" stroke-width="1" /><rect x="435.9" y="999.9" width="1" height="1" fill="#b88a94" stroke="none" stroke-width="1" /><rect x="438" y="999" width="1.7" height="1.7" fill="#2a0c14" stroke="none" stroke-width="1" /><rect x="438.9" y="999.9" width="1" height="1" fill="#b88a94" stroke="none" stroke-width="1" /><rect x="432" y="1003" width="1.7" height="1.7" fill="#2a0c14" stroke="none" stroke-width="1" /><rect x="432.9" y="1003.9" width="1" height="1" fill="#b88a94" stroke="none" stroke-width="1" /><rect x="435" y="1003" width="1.7" height="1.7" fill="#2a0c14" stroke="none" stroke-width="1" /><rect x="435.9" y="1003.9" width="1" height="1" fill="#b88a94" stroke="none" stroke-width="1" /><rect x="438" y="1003" width="1.7" height="1.7" fill="#2a0c14" stroke="none" stroke-width="1" /><rect x="438.9" y="1003.9" width="1" height="1" fill="#b88a94" stroke="none" stroke-width="1" /><rect x="432" y="1007" width="1.7" height="1.7" fill="#2a0c14" stroke="none" stroke-width="1" /><rect x="432.9" y="1007.9" width="1" height="1" fill="#b88a94" stroke="none" stroke-width="1" /><rect x="435" y="1007" width="1.7" height="1.7" fill="#2a0c14" stroke="none" stroke-width="1" /><rect x="435.9" y="1007.9" width="1" height="1" fill="#b88a94" stroke="none" stroke-width="1" /><rect x="438" y="1007" width="1.7" height="1.7" fill="#2a0c14" stroke="none" stroke-width="1" /><rect x="438.9" y="1007.9" width="1" height="1" fill="#b88a94" stroke="none" stroke-width="1" /><rect x="432" y="1011" width="1.7" height="1.7" fill="#2a0c14" stroke="none" stroke-width="1" /><rect x="432.9" y="1011.9" width="1" height="1" fill="#b88a94" stroke="none" stroke-width="1" /><rect x="435" y="1011" width="1.7" height="1.7" fill="#2a0c14" stroke="none" stroke-width="1" /><rect x="435.9" y="1011.9" width="1" height="1" fill="#b88a94" stroke="none" stroke-width="1" /><rect x="438" y="1011" width="1.7" height="1.7" fill="#2a0c14" stroke="none" stroke-width="1" /><rect x="438.9" y="1011.9" width="1" height="1" fill="#b88a94" stroke="none" stroke-width="1" /><rect x="432" y="1015" width="1.7" height="1.7" fill="#2a0c14" stroke="none" stroke-width="1" /><rect x="432.9" y="1015.9" width="1" height="1" fill="#b88a94" stroke="none" stroke-width="1" /><rect x="435" y="1015" width="1.7" height="1.7" fill="#2a0c14" stroke="none" stroke-width="1" /><rect x="435.9" y="1015.9" width="1" height="1" fill="#b88a94" stroke="none" stroke-width="1" /><rect x="438" y="1015" width="1.7" height="1.7" fill="#2a0c14" stroke="none" stroke-width="1" /><rect x="438.9" y="1015.9" width="1" height="1" fill="#b88a94" stroke="none" stroke-width="1" /><rect x="432" y="1019" width="1.7" height="1.7" fill="#2a0c14" stroke="none" stroke-width="1" /><rect x="432.9" y="1019.9" width="1" height="1" fill="#b88a94" stroke="none" stroke-width="1" /><rect x="435" y="1019" width="1.7" height="1.7" fill="#2a0c14" stroke="none" stroke-width="1" /><rect x="435.9" y="1019.9" width="1" height="1" fill="#b88a94" stroke="none" stroke-width="1" /><rect x="438" y="1019" width="1.7" height="1.7" fill="#2a0c14" stroke="none" stroke-width="1" /><rect x="438.9" y="1019.9" width="1" height="1" fill="#b88a94" stroke="none" stroke-width="1" /><circle cx="463.7" cy="1009" r="6.6" fill="#6ab4dc" stroke="#1c2c3c" stroke-width="0.9" /><circle cx="463.7" cy="1009" r="5.9" fill="none" stroke="#c4e4f6" stroke-width="1" /><path d="M459.7 1007 c2 -3 5 -3 7 -1 c-1 3 -5 5 -7 1z M461.7 1011 c2 1 4 0 5 -2" fill="#3a7cc0" stroke="#2a6ab0" stroke-width="0.6" stroke-linecap="round" stroke-linejoin="round" /><circle cx="465.2" cy="1011" r="1.8" fill="#2a70b8" stroke="none" stroke-width="1" /><circle cx="623.7" cy="1009" r="6.6" fill="#6ab4dc" stroke="#1c2c3c" stroke-width="0.9" /><circle cx="623.7" cy="1009" r="5.9" fill="none" stroke="#c4e4f6" stroke-width="1" /><path d="M619.7 1007 c2 -3 5 -3 7 -1 c-1 3 -5 5 -7 1z M621.7 1011 c2 1 4 0 5 -2" fill="#3a7cc0" stroke="#2a6ab0" stroke-width="0.6" stroke-linecap="round" stroke-linejoin="round" /><circle cx="625.2" cy="1011" r="1.8" fill="#2a70b8" stroke="none" stroke-width="1" /><polygon points="777,1006 782,1003 786,1007 785,1014 779,1015 777,1011" fill="#f4f4f4" stroke="#8a8a8a" stroke-width="0.7" stroke-linejoin="round" /><polygon points="788.5,1001 791.5,1003.5 784,1014 780.5,1016 781.2,1011.5" fill="#d63a2a" stroke="#7a1a10" stroke-width="0.6" stroke-linejoin="round" /><path d="M938 1003 l3 10 M942 1002 l1 11 M946 1003 l-1 10" fill="none" stroke="#d8b070" stroke-width="1.6" stroke-linecap="round" stroke-linejoin="round" /><rect x="939" y="1011" width="7" height="6" fill="#c03030" stroke="#601010" stroke-width="0.6" /><circle cx="938" cy="1002.5" r="1.5" fill="#e04040" stroke="none" stroke-width="1" /><circle cx="942" cy="1001.5" r="1.5" fill="#40a040" stroke="none" stroke-width="1" /><circle cx="946" cy="1002.5" r="1.5" fill="#4060e0" stroke="none" stroke-width="1" /><rect x="1175" y="999" width="1.7" height="1.7" fill="#2a0c14" stroke="none" stroke-width="1" /><rect x="1175.9" y="999.9" width="1" height="1" fill="#b88a94" stroke="none" stroke-width="1" /><rect x="1178" y="999" width="1.7" height="1.7" fill="#2a0c14" stroke="none" stroke-width="1" /><rect x="1178.9" y="999.9" width="1" height="1" fill="#b88a94" stroke="none" stroke-width="1" /><rect x="1181" y="999" width="1.7" height="1.7" fill="#2a0c14" stroke="none" stroke-width="1" /><rect x="1181.9" y="999.9" width="1" height="1" fill="#b88a94" stroke="none" stroke-width="1" /><rect x="1175" y="1003" width="1.7" height="1.7" fill="#2a0c14" stroke="none" stroke-width="1" /><rect x="1175.9" y="1003.9" width="1" height="1" fill="#b88a94" stroke="none" stroke-width="1" /><rect x="1178" y="1003" width="1.7" height="1.7" fill="#2a0c14" stroke="none" stroke-width="1" /><rect x="1178.9" y="1003.9" width="1" height="1" fill="#b88a94" stroke="none" stroke-width="1" /><rect x="1181" y="1003" width="1.7" height="1.7" fill="#2a0c14" stroke="none" stroke-width="1" /><rect x="1181.9" y="1003.9" width="1" height="1" fill="#b88a94" stroke="none" stroke-width="1" /><rect x="1175" y="1007" width="1.7" height="1.7" fill="#2a0c14" stroke="none" stroke-width="1" /><rect x="1175.9" y="1007.9" width="1" height="1" fill="#b88a94" stroke="none" stroke-width="1" /><rect x="1178" y="1007" width="1.7" height="1.7" fill="#2a0c14" stroke="none" stroke-width="1" /><rect x="1178.9" y="1007.9" width="1" height="1" fill="#b88a94" stroke="none" stroke-width="1" /><rect x="1181" y="1007" width="1.7" height="1.7" fill="#2a0c14" stroke="none" stroke-width="1" /><rect x="1181.9" y="1007.9" width="1" height="1" fill="#b88a94" stroke="none" stroke-width="1" /><rect x="1175" y="1011" width="1.7" height="1.7" fill="#2a0c14" stroke="none" stroke-width="1" /><rect x="1175.9" y="1011.9" width="1" height="1" fill="#b88a94" stroke="none" stroke-width="1" /><rect x="1178" y="1011" width="1.7" height="1.7" fill="#2a0c14" stroke="none" stroke-width="1" /><rect x="1178.9" y="1011.9" width="1" height="1" fill="#b88a94" stroke="none" stroke-width="1" /><rect x="1181" y="1011" width="1.7" height="1.7" fill="#2a0c14" stroke="none" stroke-width="1" /><rect x="1181.9" y="1011.9" width="1" height="1" fill="#b88a94" stroke="none" stroke-width="1" /><rect x="1175" y="1015" width="1.7" height="1.7" fill="#2a0c14" stroke="none" stroke-width="1" /><rect x="1175.9" y="1015.9" width="1" height="1" fill="#b88a94" stroke="none" stroke-width="1" /><rect x="1178" y="1015" width="1.7" height="1.7" fill="#2a0c14" stroke="none" stroke-width="1" /><rect x="1178.9" y="1015.9" width="1" height="1" fill="#b88a94" stroke="none" stroke-width="1" /><rect x="1181" y="1015" width="1.7" height="1.7" fill="#2a0c14" stroke="none" stroke-width="1" /><rect x="1181.9" y="1015.9" width="1" height="1" fill="#b88a94" stroke="none" stroke-width="1" /><rect x="1175" y="1019" width="1.7" height="1.7" fill="#2a0c14" stroke="none" stroke-width="1" /><rect x="1175.9" y="1019.9" width="1" height="1" fill="#b88a94" stroke="none" stroke-width="1" /><rect x="1178" y="1019" width="1.7" height="1.7" fill="#2a0c14" stroke="none" stroke-width="1" /><rect x="1178.9" y="1019.9" width="1" height="1" fill="#b88a94" stroke="none" stroke-width="1" /><rect x="1181" y="1019" width="1.7" height="1.7" fill="#2a0c14" stroke="none" stroke-width="1" /><rect x="1181.9" y="1019.9" width="1" height="1" fill="#b88a94" stroke="none" stroke-width="1" /><circle cx="1225.8" cy="1009.8" r="6.3" fill="#f0b040" stroke="#5a2a10" stroke-width="1.2" /><circle cx="1224.5" cy="1008" r="2.5" fill="#ffe090" stroke="none" stroke-width="1" opacity="0.7"/><ellipse cx="1243.8" cy="1007" rx="8" ry="7" fill="#6cc83a" stroke="#3a8a1a" stroke-width="0.8" transform="rotate(30 1243.8 1007)"/><path d="M1240 1007.5 l3 3 l5 -6" fill="none" stroke="#fff" stroke-width="2" stroke-linecap="round" stroke-linejoin="round" /><circle cx="1258.5" cy="1003" r="3.2" fill="#f0c020" stroke="#a07a00" stroke-width="0.6" /><path d="M1253 1015 c0 -6 3 -8 6 -8 c3 0 5 3 5 8z" fill="#f0c020" stroke="#a07a00" stroke-width="0.6" stroke-linecap="round" stroke-linejoin="round" /><polygon points="1262,1016 1266.5,1007 1271,1016" fill="#f8d020" stroke="#5a4a00" stroke-width="0.8" stroke-linejoin="round" /><line x1="1266.5" y1="1010" x2="1266.5" y2="1013" stroke="#000" stroke-width="1.2" /><circle cx="1266.5" cy="1014.6" r="0.7" fill="#000" stroke="none" stroke-width="1" /></svg><svg width="1280" height="1024" viewBox="0 0 1280 1024" style="left:0;top:0"><polygon points="85.5,9 90.5,6 94.5,10 93.5,16 87.5,17 85.5,14" fill="#f4f4f4" stroke="#8a8a8a" stroke-width="0.7" stroke-linejoin="round" /><polygon points="87.5,11 90.5,9 92.5,12 92.5,16 87.5,17" fill="#d8c9a0" stroke="none" stroke-width="1" stroke-linejoin="round" /><polygon points="97,2.5 100,5 92.5,15.5 89,17.5 89.7,13" fill="#d63a2a" stroke="#7a1a10" stroke-width="0.6" stroke-linejoin="round" /><polygon points="97,2.5 98.5,3.8 91,14 89.7,13" fill="#f08a50" stroke="none" stroke-width="1" stroke-linejoin="round" /><polygon points="89.7,13 92.5,15.5 89,17.5" fill="#f0d8a8" stroke="none" stroke-width="1" stroke-linejoin="round" /><line x1="83.5" y1="43" x2="83.5" y2="71" stroke="#9a9a9a" stroke-width="1" /><line x1="88.5" y1="43" x2="88.5" y2="71" stroke="#ffffff" stroke-width="1" /><line x1="89.5" y1="43" x2="89.5" y2="71" stroke="#9a9a9a" stroke-width="1" /><polygon points="94.6,52 98.6,66 103.6,68 97.6,50" fill="#8a8a8a" stroke="none" stroke-width="1" stroke-linejoin="round" opacity="0.55"/><polygon points="97.1,49.5 106.6,45.5 110.1,48.5 112.1,48 118.1,62.5 102.1,67.5" fill="#ffffff" stroke="#222" stroke-width="1.1" stroke-linejoin="round" /><path d="M106.6 45.5 L108.1 49.5 L110.1 48.5" fill="#e8e8e8" stroke="#222" stroke-width="0.9" stroke-linecap="round" stroke-linejoin="round" /><polygon points="126,60 130,57 135,69 131,66" fill="#777" stroke="none" stroke-width="1" stroke-linejoin="round" opacity="0.5"/><polygon points="129,55 133,53 136,66 133,68" fill="#8a7150" stroke="#1a1208" stroke-width="0.9" stroke-linejoin="round" /><polygon points="133,54.5 144.5,47.5 148,55 136,61" fill="#ffffff" stroke="#333" stroke-width="0.8" stroke-linejoin="round" /><polygon points="133,59 149,53.5 148.5,62 135,69" fill="#b8a07a" stroke="#1a1208" stroke-width="1.1" stroke-linejoin="round" /><polygon points="132,45 136.5,49.5 134.5,50 135.5,54 131.5,55 130.5,51 128.2,51.5" fill="#2aa0e0" stroke="#0a5a9a" stroke-width="0.7" stroke-linejoin="round" /><polygon points="157.5,49 176,45.5 180,65 159.5,68" fill="#5560d8" stroke="#2a30a0" stroke-width="1" stroke-linejoin="round" /><polygon points="160.5,49.5 172.5,47 174,57.5 162,59.5" fill="#ffffff" stroke="#aab" stroke-width="0.5" stroke-linejoin="round" /><polygon points="165.5,62 173.5,60.5 174.5,66 166.5,67" fill="#f4f4fa" stroke="#2a30a0" stroke-width="0.6" stroke-linejoin="round" /><polygon points="165.5,62 167.5,61.7 168.4,66.8 166.5,67" fill="#3038a8" stroke="none" stroke-width="1" stroke-linejoin="round" /></svg><div class="t" style="left:104.4px;top:3.5px;color:#fff;font-size:12px;-webkit-text-stroke:0.35px #fff;text-shadow:0 0 5px rgba(225,240,255,.95),0 0 9px rgba(170,205,250,.95),0 0 14px rgba(150,190,245,.8),0 3px 3px rgba(30,60,190,.35);">Sans titre - SketchUp</div><div class="t" style="left:90px;top:23.6px;font-size:12px;letter-spacing:-0.143px;">Fichier</div><div class="t" style="left:139px;top:23.6px;font-size:12px;letter-spacing:0.043px;">Édition</div><svg width="1280" height="1024" viewBox="0 0 1280 1024" style="left:0;top:0"><line x1="83" y1="100.5" x2="146.5" y2="100.5" stroke="#8c8c8c" stroke-width="1" /><line x1="83" y1="101.5" x2="146" y2="101.5" stroke="#ffffff" stroke-width="1" /><line x1="83" y1="106.5" x2="145" y2="106.5" stroke="#8c8c8c" stroke-width="1" /><line x1="83" y1="107.5" x2="145" y2="107.5" stroke="#ffffff" stroke-width="1" /><line x1="145.5" y1="102" x2="145.5" y2="620" stroke="#8c8c8c" stroke-width="1" /><line x1="146.5" y1="101" x2="146.5" y2="621" stroke="#ffffff" stroke-width="1" /><line x1="83" y1="619.5" x2="146" y2="619.5" stroke="#8c8c8c" stroke-width="1" /><line x1="83" y1="620.5" x2="147" y2="620.5" stroke="#ffffff" stroke-width="1" /><line x1="85" y1="171.5" x2="143" y2="171.5" stroke="#a0a0a0" stroke-width="1" /><line x1="85" y1="172.5" x2="143" y2="172.5" stroke="#ffffff" stroke-width="1" /><line x1="85" y1="267.5" x2="143" y2="267.5" stroke="#a0a0a0" stroke-width="1" /><line x1="85" y1="268.5" x2="143" y2="268.5" stroke="#ffffff" stroke-width="1" /><line x1="85" y1="363.5" x2="143" y2="363.5" stroke="#a0a0a0" stroke-width="1" /><line x1="85" y1="364.5" x2="143" y2="364.5" stroke="#ffffff" stroke-width="1" /><line x1="85" y1="459.5" x2="143" y2="459.5" stroke="#a0a0a0" stroke-width="1" /><line x1="85" y1="460.5" x2="143" y2="460.5" stroke="#ffffff" stroke-width="1" /><line x1="85" y1="555.5" x2="143" y2="555.5" stroke="#a0a0a0" stroke-width="1" /><line x1="85" y1="556.5" x2="143" y2="556.5" stroke="#ffffff" stroke-width="1" /><rect x="114.5" y="139" width="30" height="30" fill="#f9f9f9" stroke="none" stroke-width="1" /><line x1="114.5" y1="139.5" x2="144.5" y2="139.5" stroke="#7c7c7c" stroke-width="1" /><line x1="115" y1="139" x2="115" y2="169" stroke="#7c7c7c" stroke-width="1" /><line x1="144" y1="140" x2="144" y2="169" stroke="#ffffff" stroke-width="1" /><line x1="115.5" y1="168.5" x2="144.5" y2="168.5" stroke="#ffffff" stroke-width="1" /><polygon points="93.2,116.2 93.2,129.2 96.2,126.6 98.6,131.6 101.4,130.4 99,125.6 103,125.4" fill="#fff" stroke="#fff" stroke-width="1.6" stroke-linejoin="round" opacity="0.95"/><polygon points="94.2,117 94.2,128 96.8,125.6 99.2,130.6 100.8,129.9 98.5,125 102,124.8" fill="#000" stroke="#000" stroke-width="0.4" stroke-linejoin="round" /><polygon points="119.5,119 131,112.5 140,121.5 139,129.5 127,135.5 121,127" fill="#e6e6e6" stroke="#b2b2b2" stroke-width="1.3" stroke-linejoin="round" /><path d="M119.5 119 L127.7 127.3 L140 121.5 M127.7 127.3 L127 135.5" fill="none" stroke="#c6c6c6" stroke-width="0.9" stroke-linecap="round" stroke-linejoin="round" /><polygon points="122.2,119.4 130.8,114.8 137.4,121.8 127.7,127.3" fill="#ffffff" stroke="#cfcfcf" stroke-width="0.8" stroke-linejoin="round" /><polygon points="127.7,127.3 137.4,121.8 136.5,127.5 128.2,132.5" fill="#fbfbfb" stroke="#cfcfcf" stroke-width="0.8" stroke-linejoin="round" /><polygon points="122.2,119.4 127.7,127.3 128.2,132.5 123,125" fill="#f2f2f2" stroke="#cfcfcf" stroke-width="0.6" stroke-linejoin="round" /><ellipse cx="101" cy="163.5" rx="9.5" ry="2.4" fill="#888" stroke="none" stroke-width="1" opacity="0.45"/><path d="M94.5 153 C93.5 157.5 96 162 100 163.5 C104.5 164.5 109.5 161 109.5 156.5 L107.5 147.5 C104 151 98 153.5 94.5 153 Z" fill="#d9d2ac" stroke="#3a3a34" stroke-width="1.4" stroke-linecap="round" stroke-linejoin="round" /><path d="M104 151 C106 155 107 159 106 162.5 C108.5 161 109.8 158.5 109.5 156.5 L107.5 147.5 Z" fill="#5a5a50" stroke="none" stroke-width="1" stroke-linecap="round" stroke-linejoin="round" /><path d="M94.5 153 C95 149 103 144 107.5 147.5 C105 151.5 98 154 94.5 153 Z" fill="#6a6a60" stroke="#2a2a26" stroke-width="1.1" stroke-linecap="round" stroke-linejoin="round" /><path d="M100.5 149 C99.5 143.5 106.5 141.5 107.3 146.5" fill="none" stroke="#2a2a26" stroke-width="1.5" stroke-linecap="round" stroke-linejoin="round" /><path d="M98.5 144 C92 146 86 153 86.3 158.5 C86.8 161 88 158.5 89 159.5 L89.3 165 C90.3 163 90.3 159 91.8 156 C93.3 152.5 96 150 99.5 146.3 Z" fill="#f4ee10" stroke="#4a4600" stroke-width="1" stroke-linecap="round" stroke-linejoin="round" /><path d="M95 148.5 C91.5 151 89 155 88.5 158" fill="none" stroke="#fffb90" stroke-width="1" stroke-linecap="round" stroke-linejoin="round" /><polygon points="130,166 141,148 141.5,152 133,166" fill="#888" stroke="none" stroke-width="1" stroke-linejoin="round" opacity="0.6"/><polygon points="131.5,143.3 140.8,145.5 129.4,166 119.6,160" fill="#f58aa6" stroke="#8a3048" stroke-width="0.9" stroke-linejoin="round" /><polygon points="119.6,160 129.4,166 129.6,163 121,157.5" fill="#d86a88" stroke="none" stroke-width="1" stroke-linejoin="round" /><text x="0" y="0" font-size="4.5" font-family="Liberation Sans, DejaVu Sans, sans-serif" transform="translate(128.5,157) rotate(-62)" fill="#7a2038" font-weight="bold">pink</text><polygon points="89.5,201 109.5,198.5 110,200 90,202.5" fill="#999" stroke="none" stroke-width="1" stroke-linejoin="round" opacity="0.5"/><polygon points="86.3,181.3 106.4,178.3 109.3,197.9 88.8,200.8" fill="#a89070" stroke="#2a2418" stroke-width="1.3" stroke-linejoin="round" /><path d="M121 200 L140 193" fill="none" stroke="#999" stroke-width="2" stroke-linecap="round" stroke-linejoin="round" opacity="0.6"/><polygon points="117.6,200.8 120.5,194.5 123.8,197.5" fill="#f0e0c0" stroke="#444" stroke-width="0.5" stroke-linejoin="round" /><polygon points="117.6,200.8 118.8,198.2 120,199.5" fill="#222" stroke="none" stroke-width="1" stroke-linejoin="round" /><polygon points="120.5,194.5 135.5,180 138.8,183.2 123.8,197.5" fill="#e01818" stroke="#801010" stroke-width="0.6" stroke-linejoin="round" /><polygon points="135.5,180 137.2,178.3 140.3,181.5 138.8,183.2" fill="#f4a0b8" stroke="#a05068" stroke-width="0.5" stroke-linejoin="round" /><path d="M121.5 195 L136.5 180.5" fill="none" stroke="#ff7060" stroke-width="0.9" stroke-linecap="round" stroke-linejoin="round" /><ellipse cx="98.5" cy="220.5" rx="11.3" ry="11.3" fill="#999" stroke="none" stroke-width="1" opacity="0.35"/><circle cx="97.6" cy="219.4" r="11" fill="#a89070" stroke="#2a2418" stroke-width="1.3" /><path d="M140.5 212 C134 206 122 207 120 219 C119 224 121 229 124.3 231" fill="none" stroke="#000" stroke-width="1.9" stroke-linecap="round" stroke-linejoin="round" /><path d="M121 222 C124 217 131 216 137 216" fill="none" stroke="#999" stroke-width="0.9" stroke-linecap="round" stroke-linejoin="round" /><path d="M118.5 224 C119 228 120.5 229 122 230" fill="none" stroke="#555" stroke-width="0.7" stroke-linecap="round" stroke-linejoin="round" /><polygon points="108.8,246 101.5,261.4 100.5,261.4 107,246" fill="#999" stroke="none" stroke-width="1" stroke-linejoin="round" opacity="0.5"/><polygon points="86.3,241.8 108.8,238.4 100.5,261.4" fill="#a89070" stroke="#2a2418" stroke-width="1.2" stroke-linejoin="round" /><path d="M119.5 242.5 C124 238.5 134 238 138.5 243 C142 248 139 255 134 258 C130 261 125 261 124.5 256 C124 251 127 246 131 246 C135 246 136 252 132 254 C128 255 127 250 124 249 C120 250 119 255 118.5 257.5 L121 256 M118.5 257.5 L118 254.5" fill="none" stroke="#000" stroke-width="1.5" stroke-linecap="round" stroke-linejoin="round" /><path d="M125 244 C130 242 136 244 137 249" fill="none" stroke="#888" stroke-width="0.7" stroke-linecap="round" stroke-linejoin="round" /><polygon points="93.7,274.3 101.137,278.94 98.6567,280.006 99.7287,282.753 95.6864,284.491 94.4307,281.823 91.9502,282.889" fill="#e01a1a" stroke="#b01010" stroke-width="0.4" stroke-linejoin="round" /><polygon points="109.3,279.7 104.984,287.33 103.812,284.897 100.606,286.331 98.6964,282.367 101.815,280.753 100.643,278.321" fill="#e01a1a" stroke="#b01010" stroke-width="0.4" stroke-linejoin="round" /><polygon points="105.9,296.3 97.7329,293.116 99.9733,291.609 97.3116,287.472 100.963,285.017 103.79,289.042 106.031,287.535" fill="#e01a1a" stroke="#b01010" stroke-width="0.4" stroke-linejoin="round" /><polygon points="86.3,291 90.5038,283.308 91.7113,285.723 95.9745,283.703 97.9422,287.639 93.7685,289.837 94.9759,292.252" fill="#e01a1a" stroke="#b01010" stroke-width="0.4" stroke-linejoin="round" /><rect x="97" y="283.7" width="2.6" height="2.6" fill="#fff" stroke="none" stroke-width="1" transform="rotate(20 98.3 285)"/><rect x="95.4252" y="279.506" width="1.8" height="1.8" fill="#fff" stroke="none" stroke-width="1" opacity="0.9"/><rect x="101.904" y="281.93" width="1.8" height="1.8" fill="#fff" stroke="none" stroke-width="1" opacity="0.9"/><rect x="100.19" y="288.249" width="1.8" height="1.8" fill="#fff" stroke="none" stroke-width="1" opacity="0.9"/><rect x="92.9279" y="286.336" width="1.8" height="1.8" fill="#fff" stroke="none" stroke-width="1" opacity="0.9"/><polygon points="117.1,287.5 126.9,285 139,288 139,293.5 127.9,297 117.1,293" fill="#7a6a50" stroke="none" stroke-width="1" stroke-linejoin="round" /><polygon points="117.1,287.5 126.9,285 139,288 127.9,291" fill="#c8b088" stroke="#6a5a40" stroke-width="0.5" stroke-linejoin="round" /><polygon points="127.9,291 139,288 139,293.5 127.9,297" fill="#6a5c44" stroke="none" stroke-width="1" stroke-linejoin="round" /><polygon points="117.1,287.5 127.9,291 127.9,297 117.1,293" fill="#8a7858" stroke="none" stroke-width="1" stroke-linejoin="round" /><polygon points="127.9,273.9 132.6,283.6 129.7,283.2 129.7,288 126.1,288 126.1,283.2 123.2,283.6" fill="#e01a1a" stroke="#a01010" stroke-width="0.4" stroke-linejoin="round" /><path d="M88.8 312.5 C90 305.5 100 303.5 105 310" fill="none" stroke="#999" stroke-width="3" stroke-linecap="round" stroke-linejoin="round" opacity="0.4" transform="translate(1,1.8)"/><path d="M88.8 312.8 C90 305 100.5 303 105.5 310" fill="none" stroke="#e01a1a" stroke-width="3.6" stroke-linecap="round" stroke-linejoin="round" /><polygon points="109.5,314 99.5,312 107,303.5" fill="#e01a1a" stroke="none" stroke-width="1" stroke-linejoin="round" /><path d="M107.2 318 C105 326 94.5 327.5 90 320.5" fill="none" stroke="#e01a1a" stroke-width="3.6" stroke-linecap="round" stroke-linejoin="round" /><polygon points="86,316.8 96,318.3 88.5,326.5" fill="#e01a1a" stroke="none" stroke-width="1" stroke-linejoin="round" /><ellipse cx="130" cy="323" rx="8" ry="3.4" fill="#888" stroke="none" stroke-width="1" opacity="0.4"/><path d="M120.8 321.2 L120.8 325.2 A8 3.5 0 0 0 136.8 325.2 L136.8 321.2 Z" fill="#5a4c38" stroke="none" stroke-width="1" stroke-linecap="round" stroke-linejoin="round" /><ellipse cx="128.8" cy="321.2" rx="8" ry="3.5" fill="#c0aa80" stroke="#6a5a40" stroke-width="0.5" /><path d="M118.5 305 C128 303 137 310 136.8 321" fill="none" stroke="#c01818" stroke-width="1.8" stroke-linecap="round" stroke-linejoin="round" /><polygon points="119,310 128.5,309.5 126,313 129.5,319.5 127,320.5 123.5,314 121,316" fill="#e01a1a" stroke="#a01010" stroke-width="0.4" stroke-linejoin="round" /><polygon points="89.8,357.5 109.8,349.6 110.3,350.6 90.3,358.6" fill="#999" stroke="none" stroke-width="1" stroke-linejoin="round" opacity="0.5"/><polygon points="86.3,338.3 101.5,334.4 109.3,349 89.3,356.9" fill="#ffffff" stroke="#3a3a3a" stroke-width="1" stroke-linejoin="round" /><polygon points="98.5,344.7 105.2,341.5 109.3,349 101,352.3" fill="#a89878" stroke="#5a4c38" stroke-width="0.5" stroke-linejoin="round" /><circle cx="86.6" cy="338.5" r="1" fill="#2aa090" stroke="none" stroke-width="1" /><line x1="97.5" y1="344.5" x2="92" y2="340.5" stroke="#e01a1a" stroke-width="2.2" /><polygon points="88.6,338.8 95,338.8 91.3,343.6" fill="#e01a1a" stroke="none" stroke-width="1" stroke-linejoin="round" /><path d="M140.5 338.3 C131 331 118 336 117.5 346.5 C117.5 351 119.5 354 122.5 357" fill="none" stroke="#000" stroke-width="1.9" stroke-linecap="round" stroke-linejoin="round" /><path d="M136 342 C131 339 126 341 126 346 C126 348 127 349 128.5 350.5" fill="none" stroke="#000" stroke-width="1.7" stroke-linecap="round" stroke-linejoin="round" /><polygon points="121,335.5 130,337.5 126.5,339.5 131.5,343 129,344.5 124.5,341 123,344" fill="#e01a1a" stroke="#a01010" stroke-width="0.4" stroke-linejoin="round" /><polygon points="129,341 134,342 131,345.5" fill="#e01a1a" stroke="none" stroke-width="1" stroke-linejoin="round" /><polygon points="99,386 108,382 110,385 101,389" fill="#999" stroke="none" stroke-width="1" stroke-linejoin="round" opacity="0.5"/><polygon points="95.6,383 97.8,386.3 87.8,391.8 86.3,388.5" fill="#e8c818" stroke="#5a4a00" stroke-width="0.6" stroke-linejoin="round" /><line x1="94" y1="384.2" x2="95" y2="386" stroke="#6a5a00" stroke-width="0.5" /><line x1="91.8" y1="385.45" x2="92.8" y2="387.25" stroke="#6a5a00" stroke-width="0.5" /><line x1="89.6" y1="386.7" x2="90.6" y2="388.5" stroke="#6a5a00" stroke-width="0.5" /><line x1="87.4" y1="387.95" x2="88.4" y2="389.75" stroke="#6a5a00" stroke-width="0.5" /><polygon points="93.2,374 96.5,370.8 106,370 108,372 108,381 99,386 94.5,382.5" fill="#5a5a5a" stroke="#2a2a2a" stroke-width="0.7" stroke-linejoin="round" /><ellipse cx="102.9" cy="377.6" rx="3.4" ry="4.8" fill="#f0c818" stroke="#6a5a00" stroke-width="0.7" transform="rotate(12 102.9 377.6)"/><ellipse cx="94.6" cy="376.6" rx="1.6" ry="2.6" fill="#d8b010" stroke="none" stroke-width="1" /><line x1="119" y1="386.4" x2="132.7" y2="372.7" stroke="#000" stroke-width="1.1" /><line x1="131.3" y1="371.8" x2="139.6" y2="381.5" stroke="#000" stroke-width="1.4" /><line x1="120" y1="383" x2="128.8" y2="392.3" stroke="#000" stroke-width="1.4" /><path d="M130.5 370.5 L135 376.5 M134.5 370.8 L131.5 377" fill="none" stroke="#000" stroke-width="1.2" stroke-linecap="round" stroke-linejoin="round" /><path d="M118 382.5 L123 388 M122.5 382 L119 388.5" fill="none" stroke="#000" stroke-width="1.2" stroke-linecap="round" stroke-linejoin="round" /><text x="119.5" y="379.5" font-size="9.5" font-family="Liberation Sans, DejaVu Sans, sans-serif" font-weight="bold">3</text><polygon points="108.5,406 94,424 93,423 107.5,404" fill="#999" stroke="none" stroke-width="1" stroke-linejoin="round" opacity="0.45"/><path d="M107.8 401 L92.2 422.5 C85 418 83.5 410 88.5 404.5 C93.5 399.5 101 398.5 107.8 401 Z" fill="#f0c81c" stroke="#7a6400" stroke-width="0.8" stroke-linecap="round" stroke-linejoin="round" /><path d="M103.5 403.5 L93.3 417.5 C89.3 414 88.8 409.5 92 406.5 C95 403.5 99.5 402.8 103.5 403.5 Z" fill="#f0f0f0" stroke="#7a6400" stroke-width="0.6" stroke-linecap="round" stroke-linejoin="round" /><line x1="106" y1="402.5" x2="92" y2="420.5" stroke="#fae060" stroke-width="0.8" /><rect x="122.5" y="412" width="18" height="2.5" fill="#999" stroke="none" stroke-width="1" opacity="0.5"/><rect x="120.2" y="402.2" width="19.4" height="9.2" fill="#ffffff" stroke="#000" stroke-width="1.2" /><text x="122" y="410" font-size="7.6" font-family="Liberation Sans, DejaVu Sans, sans-serif" font-weight="bold" textLength="16" lengthAdjust="spacingAndGlyphs">ABC</text><line x1="120.5" y1="411" x2="120.5" y2="420" stroke="#000" stroke-width="1.1" /><polygon points="118.3,419 122.7,419 120.5,424" fill="#000" stroke="none" stroke-width="1" stroke-linejoin="round" /><line x1="87.5" y1="449.5" x2="104" y2="441" stroke="#1aa020" stroke-width="2.6" /><polygon points="107.5,439.3 104.589,444.599 101.501,438.541" fill="#1aa020" stroke="none" stroke-width="1" stroke-linejoin="round" /><line x1="87.5" y1="449.5" x2="104" y2="441" stroke="#085008" stroke-width="0.5" stroke-dasharray="1 1.5"/><line x1="90" y1="440.2" x2="105" y2="450.5" stroke="#d01818" stroke-width="2.6" /><polygon points="109.5,453.6 102.513,453.229 106.539,447.26" fill="#d01818" stroke="none" stroke-width="1" stroke-linejoin="round" /><line x1="97" y1="436" x2="97" y2="453.5" stroke="#1428c8" stroke-width="2.8" /><polygon points="97,429.6 101,436.6 93,436.6" fill="#1428c8" stroke="none" stroke-width="1" stroke-linejoin="round" /><polygon points="133,440 139,437 138,450 134,452" fill="#aaa" stroke="none" stroke-width="1" stroke-linejoin="round" opacity="0.5"/><text x="116.5" y="453.5" font-size="31" font-family="Liberation Serif, DejaVu Serif, serif" font-weight="bold" fill="#4a3c2c" textLength="22" lengthAdjust="spacingAndGlyphs" transform="translate(1.3,0.8)">A</text><text x="116.5" y="453.5" font-size="31" font-family="Liberation Serif, DejaVu Serif, serif" font-weight="bold" fill="#a8987a" stroke="#3a3024" stroke-width="0.8" textLength="22" lengthAdjust="spacingAndGlyphs">A</text><path d="M88 474.5 C92 470.5 104 472 108.5 478.5" fill="none" stroke="#2a3a5a" stroke-width="2" stroke-linecap="round" stroke-linejoin="round" /><path d="M93.5 467.5 L97 473" fill="none" stroke="#2a3a5a" stroke-width="2" stroke-linecap="round" stroke-linejoin="round" /><path d="M101 468.5 C106.5 473 105.5 484 99 488.5" fill="none" stroke="#2a78e0" stroke-width="3.8" stroke-linecap="round" stroke-linejoin="round" /><polygon points="99,465.5 107.5,471.5 98.5,474" fill="#2a78e0" stroke="#1a4aa0" stroke-width="0.4" stroke-linejoin="round" /><path d="M87.8 476.5 C88.5 484 94 488.5 99.5 488" fill="none" stroke="#2a78e0" stroke-width="3.4" stroke-linecap="round" stroke-linejoin="round" /><path d="M88.5 476.5 C92 478 96 480.5 100 483" fill="none" stroke="#2a78e0" stroke-width="3.6" stroke-linecap="round" stroke-linejoin="round" /><polygon points="105,486.5 96.5,486 100.5,479.5" fill="#2a78e0" stroke="#1a4aa0" stroke-width="0.4" stroke-linejoin="round" /><path d="M108.5 478.5 C109 481.5 108 484 106.5 485.5" fill="none" stroke="#1a3a7a" stroke-width="2" stroke-linecap="round" stroke-linejoin="round" /><path d="M93.5 487 C95.5 489.5 98.5 490 101 489" fill="none" stroke="#1a3a7a" stroke-width="1.8" stroke-linecap="round" stroke-linejoin="round" /><path d="M91 481 L95 485" fill="none" stroke="#bcd8ff" stroke-width="1.2" stroke-linecap="round" stroke-linejoin="round" /><path d="M118 484.5 C120 481 121 476 123.5 472 C125 470 127 470 127 472 L126.5 474 C128 470 130 467 131.5 467 C133 467 133 469 132.5 470.5 C134 468 135.5 467 136.5 468 C137.5 469 137 471 136 472.5 C137.5 471 139 470.5 139.5 471.5 C140 473 137 476 135 479 C134 480.5 133 481.5 133.5 482 C135 481 138 480 139.5 481 C140.5 482 139 483 137 483.5 C133 484.5 128 487 124.5 489 Z" fill="#ffffff" stroke="#111" stroke-width="1.1" stroke-linecap="round" stroke-linejoin="round" /><path d="M118 484.5 L124.5 489" fill="none" stroke="#f0f0f0" stroke-width="1.6" stroke-linecap="round" stroke-linejoin="round" /><path d="M129 473.5 L131.3 469 M132.5 474 L135.3 469.8 M135 476 L138 472.3" fill="none" stroke="#111" stroke-width="1" stroke-linecap="round" stroke-linejoin="round" /><ellipse cx="95.2" cy="507.5" rx="7.2" ry="2.5" fill="#888" stroke="none" stroke-width="1" opacity="0.35"/><line x1="98.8099" y1="507.862" x2="107" y2="516.5" stroke="#111" stroke-width="3.2" stroke-linecap="round"/><circle cx="94.2" cy="503" r="6.2" fill="#9fc0e4" stroke="#26343e" stroke-width="2" /><path d="M90.79 502.38 A3.72 3.72 0 0 1 94.82 499.28" fill="none" stroke="#dcecfa" stroke-width="1.1" stroke-linecap="round" stroke-linejoin="round" /><polygon points="118.6,496.6 124,497 119.5,501.5" fill="#4a88e0" stroke="#2a5ab0" stroke-width="0.4" stroke-linejoin="round" /><polygon points="135.9,496 130.8,497 134.9,501" fill="#4a88e0" stroke="#2a5ab0" stroke-width="0.4" stroke-linejoin="round" /><polygon points="117.6,513.2 119,506.8 124.8,511.4" fill="#4a88e0" stroke="#2a5ab0" stroke-width="0.4" stroke-linejoin="round" /><polygon points="137.8,512.4 133.2,506.8 131.4,511.6" fill="#4a88e0" stroke="#2a5ab0" stroke-width="0.4" stroke-linejoin="round" /><ellipse cx="128.9" cy="508.9" rx="6.4" ry="2.5" fill="#888" stroke="none" stroke-width="1" opacity="0.35"/><line x1="131.746" y1="508.874" x2="138.3" y2="516.5" stroke="#111" stroke-width="3.2" stroke-linecap="round"/><circle cx="127.9" cy="504.4" r="5.4" fill="#9fc0e4" stroke="#26343e" stroke-width="2" /><path d="M124.93 503.86 A3.24 3.24 0 0 1 128.44 501.16" fill="none" stroke="#dcecfa" stroke-width="1.1" stroke-linecap="round" stroke-linejoin="round" /><ellipse cx="93.7" cy="536.7" rx="7" ry="2.5" fill="#888" stroke="none" stroke-width="1" opacity="0.35"/><line x1="97.1384" y1="536.949" x2="107" y2="547.5" stroke="#111" stroke-width="3.2" stroke-linecap="round"/><circle cx="92.7" cy="532.2" r="6" fill="#9fc0e4" stroke="#26343e" stroke-width="2" /><path d="M89.4 531.6 A3.6 3.6 0 0 1 93.3 528.6" fill="none" stroke="#dcecfa" stroke-width="1.1" stroke-linecap="round" stroke-linejoin="round" /><polygon points="94,545 97.5,531.5 101,535 107,532 110,536 107,543 100,545.5 96.5,543" fill="#2a72e0" stroke="#123a80" stroke-width="0.8" stroke-linejoin="round" /><polygon points="100,545.5 103.5,543 108.5,548.5 105.5,550.5" fill="#111" stroke="none" stroke-width="1" stroke-linejoin="round" /><path d="M99 538 L105 536" fill="none" stroke="#7ab0ff" stroke-width="1.2" stroke-linecap="round" stroke-linejoin="round" /><ellipse cx="135.7" cy="536.7" rx="7" ry="2.5" fill="#888" stroke="none" stroke-width="1" opacity="0.35"/><line x1="130.165" y1="536.857" x2="119.8" y2="547.5" stroke="#111" stroke-width="3.2" stroke-linecap="round"/><circle cx="134.7" cy="532.2" r="6" fill="#9fc0e4" stroke="#26343e" stroke-width="2" /><path d="M131.4 531.6 A3.6 3.6 0 0 1 135.3 528.6" fill="none" stroke="#dcecfa" stroke-width="1.1" stroke-linecap="round" stroke-linejoin="round" /><polygon points="133,545 129.5,531.5 126,535 120,532 117,536 120,543 127,545.5 130.5,543" fill="#2a72e0" stroke="#123a80" stroke-width="0.8" stroke-linejoin="round" /><polygon points="127,545.5 123.5,543 118.5,548.5 121.5,550.5" fill="#111" stroke="none" stroke-width="1" stroke-linejoin="round" /><path d="M128 538 L122 536" fill="none" stroke="#7ab0ff" stroke-width="1.2" stroke-linecap="round" stroke-linejoin="round" /><path d="M91 585.8 L104.4 580.2 M91.6 580.2 L105.2 585.8" fill="none" stroke="#d01020" stroke-width="1.3" stroke-linecap="round" stroke-linejoin="round" /><path d="M97.2 566 C95.3 567 94.4 569.5 94.6 573.5 L95.8 575 L95.6 582.5 L97.8 582.5 L98.3 577 L98.9 577 L99.4 582.5 L101.6 582.5 L101.3 575 L102.6 573.5 C102.8 569.5 101.8 567 99.9 566 Z" fill="#ffffff" stroke="#000" stroke-width="1.4" stroke-linecap="round" stroke-linejoin="round" /><circle cx="98.5" cy="564.2" r="1.5" fill="#fff" stroke="#000" stroke-width="1.1" /><path d="M98.5 561.3 L98.5 562.8" fill="none" stroke="#000" stroke-width="1" stroke-linecap="round" stroke-linejoin="round" /><path d="M118.5 572 C122 566 132 564.5 139.5 571" fill="none" stroke="#000" stroke-width="1.8" stroke-linecap="round" stroke-linejoin="round" /><path d="M119 573.5 C122 569.5 132 568.5 137.5 574 C133 578.5 123.5 578.5 119 573.5 Z" fill="#f4f4f4" stroke="#222" stroke-width="1" stroke-linecap="round" stroke-linejoin="round" /><circle cx="127.6" cy="573.3" r="3.6" fill="#3a3a3a" stroke="#000" stroke-width="0.6" /><circle cx="127.6" cy="573.3" r="1.6" fill="#000" stroke="none" stroke-width="1" /><circle cx="126.6" cy="572.2" r="0.8" fill="#fff" stroke="none" stroke-width="1" /><path d="M121 579 C125 582.5 133 582.5 138 577" fill="none" stroke="#999" stroke-width="1.4" stroke-linecap="round" stroke-linejoin="round" opacity="0.6"/><path d="M137 573.5 L140.5 575" fill="none" stroke="#444" stroke-width="0.9" stroke-linecap="round" stroke-linejoin="round" /><ellipse cx="93.4" cy="602.8" rx="3.9" ry="6.1" fill="#000" stroke="none" stroke-width="1" transform="rotate(-14 93.4 602.8)"/><rect x="92.8" y="610.6" width="4.8" height="5" fill="#000" stroke="none" stroke-width="1" rx="1.8" transform="rotate(-10 95.2 613)"/><ellipse cx="104.4" cy="598.4" rx="4.3" ry="6.2" fill="#000" stroke="none" stroke-width="1" transform="rotate(10 104.4 598.4)"/><rect x="100.6" y="605.8" width="5" height="4.8" fill="#000" stroke="none" stroke-width="1" rx="1.8" transform="rotate(8 103 608)"/><polygon points="129.5,592.2 141.1,604 129.5,615.8" fill="#000" stroke="none" stroke-width="1" stroke-linejoin="round" /><circle cx="127.7" cy="604" r="8.6" fill="#ffffff" stroke="#000" stroke-width="1.5" /><line x1="115.5" y1="603.8" x2="136.7" y2="603.8" stroke="#000" stroke-width="1.4" /><text x="127.5" y="602.1" font-size="7.6" font-family="Liberation Sans, DejaVu Sans, sans-serif" font-weight="bold" text-anchor="middle">C</text><text x="122" y="609.9" font-size="6.6" font-family="Liberation Sans, DejaVu Sans, sans-serif" font-weight="bold" textLength="11.4" lengthAdjust="spacingAndGlyphs">A-5</text></svg><div class="a" style="left:0;top:760px;width:209px;height:100px;overflow:hidden"><svg width="1280" height="1024" viewBox="0 0 1280 1024" style="left:0;top:-760px"><line x1="145" y1="771.5" x2="209" y2="771.5" stroke="#8c8c8c" stroke-width="1" /><line x1="146" y1="772.5" x2="209" y2="772.5" stroke="#ffffff" stroke-width="1" /><line x1="146" y1="777.5" x2="209" y2="777.5" stroke="#8c8c8c" stroke-width="1" /><line x1="146" y1="778.5" x2="209" y2="778.5" stroke="#ffffff" stroke-width="1" /><line x1="145.5" y1="771" x2="145.5" y2="840" stroke="#8c8c8c" stroke-width="1" /><line x1="146.5" y1="773" x2="146.5" y2="840" stroke="#ffffff" stroke-width="1" /><line x1="145" y1="840.5" x2="209" y2="840.5" stroke="#8c8c8c" stroke-width="1" /><line x1="145" y1="841.5" x2="209" y2="841.5" stroke="#ffffff" stroke-width="1" /><rect x="178" y="780" width="30.5" height="29" fill="#f9f9f9" stroke="none" stroke-width="1" /><line x1="178" y1="780.5" x2="208.5" y2="780.5" stroke="#7c7c7c" stroke-width="1" /><line x1="178.5" y1="780" x2="178.5" y2="809" stroke="#7c7c7c" stroke-width="1" /><line x1="208" y1="781" x2="208" y2="809" stroke="#ffffff" stroke-width="1" /><line x1="179" y1="808.5" x2="208.5" y2="808.5" stroke="#ffffff" stroke-width="1" /><rect x="147.5" y="810" width="30" height="29.5" fill="#f9f9f9" stroke="none" stroke-width="1" /><line x1="147.5" y1="810.5" x2="177.5" y2="810.5" stroke="#7c7c7c" stroke-width="1" /><line x1="148" y1="810" x2="148" y2="839.5" stroke="#7c7c7c" stroke-width="1" /><line x1="177" y1="811" x2="177" y2="839.5" stroke="#ffffff" stroke-width="1" /><line x1="148.5" y1="839" x2="177.5" y2="839" stroke="#ffffff" stroke-width="1" /><polygon points="162.8,782.7 174.4,794.5 162.8,806.3" fill="#000" stroke="none" stroke-width="1" stroke-linejoin="round" /><circle cx="161" cy="794.5" r="8.6" fill="#ffffff" stroke="#000" stroke-width="1.5" /><line x1="148.8" y1="794.3" x2="170" y2="794.3" stroke="#000" stroke-width="1.4" /><text x="160.8" y="792.6" font-size="7.6" font-family="Liberation Sans, DejaVu Sans, sans-serif" font-weight="bold" text-anchor="middle">C</text><text x="155.3" y="800.4" font-size="6.6" font-family="Liberation Sans, DejaVu Sans, sans-serif" font-weight="bold" textLength="11.4" lengthAdjust="spacingAndGlyphs">A-5</text><polygon points="195,786 201,791 201.5,800 197,805 192,803" fill="#8e9490" stroke="none" stroke-width="1" stroke-linejoin="round" /><polygon points="185,790 190.5,785.5 196,790 196,805 185.5,801" fill="#c0c8c4" stroke="none" stroke-width="1" stroke-linejoin="round" /><polygon points="183.5,784.5 198.5,787 197.5,807.5 184.5,802.5" fill="none" stroke="#e04a5a" stroke-width="1.9" stroke-linejoin="round" /><polygon points="159.5,815 167,814 173,823 173,832 166.5,836" fill="#8e9490" stroke="none" stroke-width="1" stroke-linejoin="round" /><polygon points="155,823 161,815 166.5,823 166.5,836 155.5,831.5" fill="#c0c8c4" stroke="#e04a5a" stroke-width="1.8" stroke-linejoin="round" /><path d="M154.5 814.5 L155 823 L155.5 831.5" fill="none" stroke="#e04a5a" stroke-width="1.5" stroke-linecap="round" stroke-linejoin="round" /><path d="M154.5 814.5 L161 815 L167 814" fill="none" stroke="#8ab0b8" stroke-width="1" stroke-linecap="round" stroke-linejoin="round" /><path d="M157.5 835.5 L166.5 838 L168.5 836" fill="none" stroke="#e04a5a" stroke-width="1.2" stroke-linecap="round" stroke-linejoin="round" opacity="0.6"/></svg></div><div class="t" style="left:116.3px;top:945.8px;font-size:11px;letter-spacing:-0.31px;width:60px;text-align:right;">Mesures</div><svg width="1280" height="1024" viewBox="0 0 1280 1024" style="left:0;top:0"><line x1="86.5" y1="937" x2="86.5" y2="965" stroke="#ffffff" stroke-width="1" /><line x1="87.5" y1="937" x2="87.5" y2="965" stroke="#a0a0a0" stroke-width="1" /><line x1="85" y1="964.5" x2="88" y2="964.5" stroke="#a0a0a0" stroke-width="1" /><line x1="85" y1="937.5" x2="88" y2="937.5" stroke="#ffffff" stroke-width="1" /><circle cx="95.8" cy="981.6" r="9.3" fill="#f6ead0" stroke="#8a682c" stroke-width="2.2" /><circle cx="95.8" cy="981.6" r="7.6" fill="none" stroke="#d8c090" stroke-width="0.8" /><ellipse cx="95.8" cy="979.3" rx="2.5" ry="3.2" fill="#f4d4c8" stroke="#d09a8a" stroke-width="0.8" /><line x1="95.8" y1="982.6" x2="95.8" y2="987.6" stroke="#d09a8a" stroke-width="1" /><circle cx="124" cy="981.6" r="9.3" fill="#f6ead0" stroke="#8a682c" stroke-width="2.2" /><circle cx="124" cy="981.6" r="7.6" fill="none" stroke="#d8c090" stroke-width="0.8" /><circle cx="124" cy="977" r="1.5" fill="#000" stroke="none" stroke-width="1" /><path d="M121.8 978.8 h4.4 v5 h-1 v5 h-2.4 v-5 h-1 z" fill="#000" stroke="none" stroke-width="1" stroke-linecap="round" stroke-linejoin="round" /><circle cx="151.6" cy="981.6" r="9.3" fill="#f6ead0" stroke="#8a682c" stroke-width="2.2" /><circle cx="151.6" cy="981.6" r="7.6" fill="none" stroke="#d8c090" stroke-width="0.8" /><text x="151.6" y="986" font-size="12.5" font-family="Liberation Sans, DejaVu Sans, sans-serif" text-anchor="middle" fill="#b4a47c">G</text><defs><linearGradient id="og113" x1="0" y1="0" x2="0" y2="1"><stop offset="0" stop-color="#8fc4dc"/><stop offset="0.42" stop-color="#3f8fc0"/><stop offset="0.48" stop-color="#0c4f9c"/><stop offset="0.8" stop-color="#0a5ab0"/><stop offset="1" stop-color="#22b8ee"/></linearGradient></defs><circle cx="113.1" cy="1011" r="20.3" fill="#0c1a26" stroke="none" stroke-width="1" opacity="0.92"/><circle cx="113.1" cy="1011" r="18.4" fill="url(#og113)" stroke="#4a7aa0" stroke-width="0.7" /><path d="M103.9 998.5 c3.2 -2.3 6.5 -2.3 9.6 -0.3 l-1.6 8.2 c-3 -1.6 -6 -1.4 -9.6 0.4 z" fill="#f2622c" stroke="none" stroke-width="1" stroke-linecap="round" stroke-linejoin="round" /><path d="M114.9 999.8 c3 1.6 6 1.4 9.2 -0.6 l-1.2 8.6 c-3 2 -6.4 2.2 -9.6 0.4 z" fill="#84c040" stroke="none" stroke-width="1" stroke-linecap="round" stroke-linejoin="round" /><path d="M100.5 1009.4 c3.4 -1.9 6.6 -2 9.8 -0.3 l-1.6 8.6 c-3 -1.6 -6.2 -1.4 -9.8 0.6 z" fill="#3aa4e6" stroke="none" stroke-width="1" stroke-linecap="round" stroke-linejoin="round" /><path d="M112.1 1010.6 c3 1.6 6 1.5 9.4 -0.5 l-1.6 8.4 c-3 2 -6.2 2.2 -9.4 0.5 z" fill="#f8c424" stroke="none" stroke-width="1" stroke-linecap="round" stroke-linejoin="round" /><path d="M98.1 1002 A17 15 0 0 1 128.1 1002" fill="none" stroke="#d4ecfa" stroke-width="1.2" stroke-linecap="round" stroke-linejoin="round" opacity="0.55"/><rect x="148" y="999" width="1.7" height="1.7" fill="#2a0c14" stroke="none" stroke-width="1" /><rect x="148.9" y="999.9" width="1" height="1" fill="#b88a94" stroke="none" stroke-width="1" /><rect x="151" y="999" width="1.7" height="1.7" fill="#2a0c14" stroke="none" stroke-width="1" /><rect x="151.9" y="999.9" width="1" height="1" fill="#b88a94" stroke="none" stroke-width="1" /><rect x="154" y="999" width="1.7" height="1.7" fill="#2a0c14" stroke="none" stroke-width="1" /><rect x="154.9" y="999.9" width="1" height="1" fill="#b88a94" stroke="none" stroke-width="1" /><rect x="148" y="1003" width="1.7" height="1.7" fill="#2a0c14" stroke="none" stroke-width="1" /><rect x="148.9" y="1003.9" width="1" height="1" fill="#b88a94" stroke="none" stroke-width="1" /><rect x="151" y="1003" width="1.7" height="1.7" fill="#2a0c14" stroke="none" stroke-width="1" /><rect x="151.9" y="1003.9" width="1" height="1" fill="#b88a94" stroke="none" stroke-width="1" /><rect x="154" y="1003" width="1.7" height="1.7" fill="#2a0c14" stroke="none" stroke-width="1" /><rect x="154.9" y="1003.9" width="1" height="1" fill="#b88a94" stroke="none" stroke-width="1" /><rect x="148" y="1007" width="1.7" height="1.7" fill="#2a0c14" stroke="none" stroke-width="1" /><rect x="148.9" y="1007.9" width="1" height="1" fill="#b88a94" stroke="none" stroke-width="1" /><rect x="151" y="1007" width="1.7" height="1.7" fill="#2a0c14" stroke="none" stroke-width="1" /><rect x="151.9" y="1007.9" width="1" height="1" fill="#b88a94" stroke="none" stroke-width="1" /><rect x="154" y="1007" width="1.7" height="1.7" fill="#2a0c14" stroke="none" stroke-width="1" /><rect x="154.9" y="1007.9" width="1" height="1" fill="#b88a94" stroke="none" stroke-width="1" /><rect x="148" y="1011" width="1.7" height="1.7" fill="#2a0c14" stroke="none" stroke-width="1" /><rect x="148.9" y="1011.9" width="1" height="1" fill="#b88a94" stroke="none" stroke-width="1" /><rect x="151" y="1011" width="1.7" height="1.7" fill="#2a0c14" stroke="none" stroke-width="1" /><rect x="151.9" y="1011.9" width="1" height="1" fill="#b88a94" stroke="none" stroke-width="1" /><rect x="154" y="1011" width="1.7" height="1.7" fill="#2a0c14" stroke="none" stroke-width="1" /><rect x="154.9" y="1011.9" width="1" height="1" fill="#b88a94" stroke="none" stroke-width="1" /><rect x="148" y="1015" width="1.7" height="1.7" fill="#2a0c14" stroke="none" stroke-width="1" /><rect x="148.9" y="1015.9" width="1" height="1" fill="#b88a94" stroke="none" stroke-width="1" /><rect x="151" y="1015" width="1.7" height="1.7" fill="#2a0c14" stroke="none" stroke-width="1" /><rect x="151.9" y="1015.9" width="1" height="1" fill="#b88a94" stroke="none" stroke-width="1" /><rect x="154" y="1015" width="1.7" height="1.7" fill="#2a0c14" stroke="none" stroke-width="1" /><rect x="154.9" y="1015.9" width="1" height="1" fill="#b88a94" stroke="none" stroke-width="1" /><rect x="148" y="1019" width="1.7" height="1.7" fill="#2a0c14" stroke="none" stroke-width="1" /><rect x="148.9" y="1019.9" width="1" height="1" fill="#b88a94" stroke="none" stroke-width="1" /><rect x="151" y="1019" width="1.7" height="1.7" fill="#2a0c14" stroke="none" stroke-width="1" /><rect x="151.9" y="1019.9" width="1" height="1" fill="#b88a94" stroke="none" stroke-width="1" /><rect x="154" y="1019" width="1.7" height="1.7" fill="#2a0c14" stroke="none" stroke-width="1" /><rect x="154.9" y="1019.9" width="1" height="1" fill="#b88a94" stroke="none" stroke-width="1" /></svg><div class="a" style="left:0;top:0;width:83px;height:1024px;overflow:hidden"><div class="a" style="left:-83px;top:0;width:1280px;height:1024px"><svg width="1280" height="1024" viewBox="0 0 1280 1024" style="left:0;top:0"><polygon points="85.5,9 90.5,6 94.5,10 93.5,16 87.5,17 85.5,14" fill="#f4f4f4" stroke="#8a8a8a" stroke-width="0.7" stroke-linejoin="round" /><polygon points="87.5,11 90.5,9 92.5,12 92.5,16 87.5,17" fill="#d8c9a0" stroke="none" stroke-width="1" stroke-linejoin="round" /><polygon points="97,2.5 100,5 92.5,15.5 89,17.5 89.7,13" fill="#d63a2a" stroke="#7a1a10" stroke-width="0.6" stroke-linejoin="round" /><polygon points="97,2.5 98.5,3.8 91,14 89.7,13" fill="#f08a50" stroke="none" stroke-width="1" stroke-linejoin="round" /><polygon points="89.7,13 92.5,15.5 89,17.5" fill="#f0d8a8" stroke="none" stroke-width="1" stroke-linejoin="round" /><line x1="83.5" y1="43" x2="83.5" y2="71" stroke="#9a9a9a" stroke-width="1" /><line x1="88.5" y1="43" x2="88.5" y2="71" stroke="#ffffff" stroke-width="1" /><line x1="89.5" y1="43" x2="89.5" y2="71" stroke="#9a9a9a" stroke-width="1" /><polygon points="94.6,52 98.6,66 103.6,68 97.6,50" fill="#8a8a8a" stroke="none" stroke-width="1" stroke-linejoin="round" opacity="0.55"/><polygon points="97.1,49.5 106.6,45.5 110.1,48.5 112.1,48 118.1,62.5 102.1,67.5" fill="#ffffff" stroke="#222" stroke-width="1.1" stroke-linejoin="round" /><path d="M106.6 45.5 L108.1 49.5 L110.1 48.5" fill="#e8e8e8" stroke="#222" stroke-width="0.9" stroke-linecap="round" stroke-linejoin="round" /><polygon points="126,60 130,57 135,69 131,66" fill="#777" stroke="none" stroke-width="1" stroke-linejoin="round" opacity="0.5"/><polygon points="129,55 133,53 136,66 133,68" fill="#8a7150" stroke="#1a1208" stroke-width="0.9" stroke-linejoin="round" /><polygon points="133,54.5 144.5,47.5 148,55 136,61" fill="#ffffff" stroke="#333" stroke-width="0.8" stroke-linejoin="round" /><polygon points="133,59 149,53.5 148.5,62 135,69" fill="#b8a07a" stroke="#1a1208" stroke-width="1.1" stroke-linejoin="round" /><polygon points="132,45 136.5,49.5 134.5,50 135.5,54 131.5,55 130.5,51 128.2,51.5" fill="#2aa0e0" stroke="#0a5a9a" stroke-width="0.7" stroke-linejoin="round" /><polygon points="157.5,49 176,45.5 180,65 159.5,68" fill="#5560d8" stroke="#2a30a0" stroke-width="1" stroke-linejoin="round" /><polygon points="160.5,49.5 172.5,47 174,57.5 162,59.5" fill="#ffffff" stroke="#aab" stroke-width="0.5" stroke-linejoin="round" /><polygon points="165.5,62 173.5,60.5 174.5,66 166.5,67" fill="#f4f4fa" stroke="#2a30a0" stroke-width="0.6" stroke-linejoin="round" /><polygon points="165.5,62 167.5,61.7 168.4,66.8 166.5,67" fill="#3038a8" stroke="none" stroke-width="1" stroke-linejoin="round" /></svg><div class="t" style="left:104.4px;top:3.5px;color:#fff;font-size:12px;-webkit-text-stroke:0.35px #fff;text-shadow:0 0 5px rgba(225,240,255,.95),0 0 9px rgba(170,205,250,.95),0 0 14px rgba(150,190,245,.8),0 3px 3px rgba(30,60,190,.35);">Sans titre - SketchUp</div><div class="t" style="left:90px;top:23.6px;font-size:12px;letter-spacing:-0.143px;">Fichier</div><div class="t" style="left:139px;top:23.6px;font-size:12px;letter-spacing:0.043px;">Édition</div><svg width="1280" height="1024" viewBox="0 0 1280 1024" style="left:0;top:0"><line x1="83" y1="100.5" x2="146.5" y2="100.5" stroke="#8c8c8c" stroke-width="1" /><line x1="83" y1="101.5" x2="146" y2="101.5" stroke="#ffffff" stroke-width="1" /><line x1="83" y1="106.5" x2="145" y2="106.5" stroke="#8c8c8c" stroke-width="1" /><line x1="83" y1="107.5" x2="145" y2="107.5" stroke="#ffffff" stroke-width="1" /><line x1="145.5" y1="102" x2="145.5" y2="620" stroke="#8c8c8c" stroke-width="1" /><line x1="146.5" y1="101" x2="146.5" y2="621" stroke="#ffffff" stroke-width="1" /><line x1="83" y1="619.5" x2="146" y2="619.5" stroke="#8c8c8c" stroke-width="1" /><line x1="83" y1="620.5" x2="147" y2="620.5" stroke="#ffffff" stroke-width="1" /><line x1="85" y1="171.5" x2="143" y2="171.5" stroke="#a0a0a0" stroke-width="1" /><line x1="85" y1="172.5" x2="143" y2="172.5" stroke="#ffffff" stroke-width="1" /><line x1="85" y1="267.5" x2="143" y2="267.5" stroke="#a0a0a0" stroke-width="1" /><line x1="85" y1="268.5" x2="143" y2="268.5" stroke="#ffffff" stroke-width="1" /><line x1="85" y1="363.5" x2="143" y2="363.5" stroke="#a0a0a0" stroke-width="1" /><line x1="85" y1="364.5" x2="143" y2="364.5" stroke="#ffffff" stroke-width="1" /><line x1="85" y1="459.5" x2="143" y2="459.5" stroke="#a0a0a0" stroke-width="1" /><line x1="85" y1="460.5" x2="143" y2="460.5" stroke="#ffffff" stroke-width="1" /><line x1="85" y1="555.5" x2="143" y2="555.5" stroke="#a0a0a0" stroke-width="1" /><line x1="85" y1="556.5" x2="143" y2="556.5" stroke="#ffffff" stroke-width="1" /><rect x="114.5" y="301" width="30" height="30" fill="#f9f9f9" stroke="none" stroke-width="1" /><line x1="114.5" y1="301.5" x2="144.5" y2="301.5" stroke="#7c7c7c" stroke-width="1" /><line x1="115" y1="301" x2="115" y2="331" stroke="#7c7c7c" stroke-width="1" /><line x1="144" y1="302" x2="144" y2="331" stroke="#ffffff" stroke-width="1" /><line x1="115.5" y1="330.5" x2="144.5" y2="330.5" stroke="#ffffff" stroke-width="1" /><polygon points="93.2,116.2 93.2,129.2 96.2,126.6 98.6,131.6 101.4,130.4 99,125.6 103,125.4" fill="#fff" stroke="#fff" stroke-width="1.6" stroke-linejoin="round" opacity="0.95"/><polygon points="94.2,117 94.2,128 96.8,125.6 99.2,130.6 100.8,129.9 98.5,125 102,124.8" fill="#000" stroke="#000" stroke-width="0.4" stroke-linejoin="round" /><polygon points="119.5,119 131,112.5 140,121.5 139,129.5 127,135.5 121,127" fill="#e6e6e6" stroke="#b2b2b2" stroke-width="1.3" stroke-linejoin="round" /><path d="M119.5 119 L127.7 127.3 L140 121.5 M127.7 127.3 L127 135.5" fill="none" stroke="#c6c6c6" stroke-width="0.9" stroke-linecap="round" stroke-linejoin="round" /><polygon points="122.2,119.4 130.8,114.8 137.4,121.8 127.7,127.3" fill="#ffffff" stroke="#cfcfcf" stroke-width="0.8" stroke-linejoin="round" /><polygon points="127.7,127.3 137.4,121.8 136.5,127.5 128.2,132.5" fill="#fbfbfb" stroke="#cfcfcf" stroke-width="0.8" stroke-linejoin="round" /><polygon points="122.2,119.4 127.7,127.3 128.2,132.5 123,125" fill="#f2f2f2" stroke="#cfcfcf" stroke-width="0.6" stroke-linejoin="round" /><ellipse cx="101" cy="163.5" rx="9.5" ry="2.4" fill="#888" stroke="none" stroke-width="1" opacity="0.45"/><path d="M94.5 153 C93.5 157.5 96 162 100 163.5 C104.5 164.5 109.5 161 109.5 156.5 L107.5 147.5 C104 151 98 153.5 94.5 153 Z" fill="#d9d2ac" stroke="#3a3a34" stroke-width="1.4" stroke-linecap="round" stroke-linejoin="round" /><path d="M104 151 C106 155 107 159 106 162.5 C108.5 161 109.8 158.5 109.5 156.5 L107.5 147.5 Z" fill="#5a5a50" stroke="none" stroke-width="1" stroke-linecap="round" stroke-linejoin="round" /><path d="M94.5 153 C95 149 103 144 107.5 147.5 C105 151.5 98 154 94.5 153 Z" fill="#6a6a60" stroke="#2a2a26" stroke-width="1.1" stroke-linecap="round" stroke-linejoin="round" /><path d="M100.5 149 C99.5 143.5 106.5 141.5 107.3 146.5" fill="none" stroke="#2a2a26" stroke-width="1.5" stroke-linecap="round" stroke-linejoin="round" /><path d="M98.5 144 C92 146 86 153 86.3 158.5 C86.8 161 88 158.5 89 159.5 L89.3 165 C90.3 163 90.3 159 91.8 156 C93.3 152.5 96 150 99.5 146.3 Z" fill="#f4ee10" stroke="#4a4600" stroke-width="1" stroke-linecap="round" stroke-linejoin="round" /><path d="M95 148.5 C91.5 151 89 155 88.5 158" fill="none" stroke="#fffb90" stroke-width="1" stroke-linecap="round" stroke-linejoin="round" /><polygon points="130,166 141,148 141.5,152 133,166" fill="#888" stroke="none" stroke-width="1" stroke-linejoin="round" opacity="0.6"/><polygon points="131.5,143.3 140.8,145.5 129.4,166 119.6,160" fill="#f58aa6" stroke="#8a3048" stroke-width="0.9" stroke-linejoin="round" /><polygon points="119.6,160 129.4,166 129.6,163 121,157.5" fill="#d86a88" stroke="none" stroke-width="1" stroke-linejoin="round" /><text x="0" y="0" font-size="4.5" font-family="Liberation Sans, DejaVu Sans, sans-serif" transform="translate(128.5,157) rotate(-62)" fill="#7a2038" font-weight="bold">pink</text><polygon points="89.5,201 109.5,198.5 110,200 90,202.5" fill="#999" stroke="none" stroke-width="1" stroke-linejoin="round" opacity="0.5"/><polygon points="86.3,181.3 106.4,178.3 109.3,197.9 88.8,200.8" fill="#a89070" stroke="#2a2418" stroke-width="1.3" stroke-linejoin="round" /><path d="M121 200 L140 193" fill="none" stroke="#999" stroke-width="2" stroke-linecap="round" stroke-linejoin="round" opacity="0.6"/><polygon points="117.6,200.8 120.5,194.5 123.8,197.5" fill="#f0e0c0" stroke="#444" stroke-width="0.5" stroke-linejoin="round" /><polygon points="117.6,200.8 118.8,198.2 120,199.5" fill="#222" stroke="none" stroke-width="1" stroke-linejoin="round" /><polygon points="120.5,194.5 135.5,180 138.8,183.2 123.8,197.5" fill="#e01818" stroke="#801010" stroke-width="0.6" stroke-linejoin="round" /><polygon points="135.5,180 137.2,178.3 140.3,181.5 138.8,183.2" fill="#f4a0b8" stroke="#a05068" stroke-width="0.5" stroke-linejoin="round" /><path d="M121.5 195 L136.5 180.5" fill="none" stroke="#ff7060" stroke-width="0.9" stroke-linecap="round" stroke-linejoin="round" /><ellipse cx="98.5" cy="220.5" rx="11.3" ry="11.3" fill="#999" stroke="none" stroke-width="1" opacity="0.35"/><circle cx="97.6" cy="219.4" r="11" fill="#a89070" stroke="#2a2418" stroke-width="1.3" /><path d="M140.5 212 C134 206 122 207 120 219 C119 224 121 229 124.3 231" fill="none" stroke="#000" stroke-width="1.9" stroke-linecap="round" stroke-linejoin="round" /><path d="M121 222 C124 217 131 216 137 216" fill="none" stroke="#999" stroke-width="0.9" stroke-linecap="round" stroke-linejoin="round" /><path d="M118.5 224 C119 228 120.5 229 122 230" fill="none" stroke="#555" stroke-width="0.7" stroke-linecap="round" stroke-linejoin="round" /><polygon points="108.8,246 101.5,261.4 100.5,261.4 107,246" fill="#999" stroke="none" stroke-width="1" stroke-linejoin="round" opacity="0.5"/><polygon points="86.3,241.8 108.8,238.4 100.5,261.4" fill="#a89070" stroke="#2a2418" stroke-width="1.2" stroke-linejoin="round" /><path d="M119.5 242.5 C124 238.5 134 238 138.5 243 C142 248 139 255 134 258 C130 261 125 261 124.5 256 C124 251 127 246 131 246 C135 246 136 252 132 254 C128 255 127 250 124 249 C120 250 119 255 118.5 257.5 L121 256 M118.5 257.5 L118 254.5" fill="none" stroke="#000" stroke-width="1.5" stroke-linecap="round" stroke-linejoin="round" /><path d="M125 244 C130 242 136 244 137 249" fill="none" stroke="#888" stroke-width="0.7" stroke-linecap="round" stroke-linejoin="round" /><polygon points="93.7,274.3 101.137,278.94 98.6567,280.006 99.7287,282.753 95.6864,284.491 94.4307,281.823 91.9502,282.889" fill="#e01a1a" stroke="#b01010" stroke-width="0.4" stroke-linejoin="round" /><polygon points="109.3,279.7 104.984,287.33 103.812,284.897 100.606,286.331 98.6964,282.367 101.815,280.753 100.643,278.321" fill="#e01a1a" stroke="#b01010" stroke-width="0.4" stroke-linejoin="round" /><polygon points="105.9,296.3 97.7329,293.116 99.9733,291.609 97.3116,287.472 100.963,285.017 103.79,289.042 106.031,287.535" fill="#e01a1a" stroke="#b01010" stroke-width="0.4" stroke-linejoin="round" /><polygon points="86.3,291 90.5038,283.308 91.7113,285.723 95.9745,283.703 97.9422,287.639 93.7685,289.837 94.9759,292.252" fill="#e01a1a" stroke="#b01010" stroke-width="0.4" stroke-linejoin="round" /><rect x="97" y="283.7" width="2.6" height="2.6" fill="#fff" stroke="none" stroke-width="1" transform="rotate(20 98.3 285)"/><rect x="95.4252" y="279.506" width="1.8" height="1.8" fill="#fff" stroke="none" stroke-width="1" opacity="0.9"/><rect x="101.904" y="281.93" width="1.8" height="1.8" fill="#fff" stroke="none" stroke-width="1" opacity="0.9"/><rect x="100.19" y="288.249" width="1.8" height="1.8" fill="#fff" stroke="none" stroke-width="1" opacity="0.9"/><rect x="92.9279" y="286.336" width="1.8" height="1.8" fill="#fff" stroke="none" stroke-width="1" opacity="0.9"/><polygon points="117.1,287.5 126.9,285 139,288 139,293.5 127.9,297 117.1,293" fill="#7a6a50" stroke="none" stroke-width="1" stroke-linejoin="round" /><polygon points="117.1,287.5 126.9,285 139,288 127.9,291" fill="#c8b088" stroke="#6a5a40" stroke-width="0.5" stroke-linejoin="round" /><polygon points="127.9,291 139,288 139,293.5 127.9,297" fill="#6a5c44" stroke="none" stroke-width="1" stroke-linejoin="round" /><polygon points="117.1,287.5 127.9,291 127.9,297 117.1,293" fill="#8a7858" stroke="none" stroke-width="1" stroke-linejoin="round" /><polygon points="127.9,273.9 132.6,283.6 129.7,283.2 129.7,288 126.1,288 126.1,283.2 123.2,283.6" fill="#e01a1a" stroke="#a01010" stroke-width="0.4" stroke-linejoin="round" /><path d="M88.8 312.5 C90 305.5 100 303.5 105 310" fill="none" stroke="#999" stroke-width="3" stroke-linecap="round" stroke-linejoin="round" opacity="0.4" transform="translate(1,1.8)"/><path d="M88.8 312.8 C90 305 100.5 303 105.5 310" fill="none" stroke="#e01a1a" stroke-width="3.6" stroke-linecap="round" stroke-linejoin="round" /><polygon points="109.5,314 99.5,312 107,303.5" fill="#e01a1a" stroke="none" stroke-width="1" stroke-linejoin="round" /><path d="M107.2 318 C105 326 94.5 327.5 90 320.5" fill="none" stroke="#e01a1a" stroke-width="3.6" stroke-linecap="round" stroke-linejoin="round" /><polygon points="86,316.8 96,318.3 88.5,326.5" fill="#e01a1a" stroke="none" stroke-width="1" stroke-linejoin="round" /><ellipse cx="130" cy="323" rx="8" ry="3.4" fill="#888" stroke="none" stroke-width="1" opacity="0.4"/><path d="M120.8 321.2 L120.8 325.2 A8 3.5 0 0 0 136.8 325.2 L136.8 321.2 Z" fill="#5a4c38" stroke="none" stroke-width="1" stroke-linecap="round" stroke-linejoin="round" /><ellipse cx="128.8" cy="321.2" rx="8" ry="3.5" fill="#c0aa80" stroke="#6a5a40" stroke-width="0.5" /><path d="M118.5 305 C128 303 137 310 136.8 321" fill="none" stroke="#c01818" stroke-width="1.8" stroke-linecap="round" stroke-linejoin="round" /><polygon points="119,310 128.5,309.5 126,313 129.5,319.5 127,320.5 123.5,314 121,316" fill="#e01a1a" stroke="#a01010" stroke-width="0.4" stroke-linejoin="round" /><polygon points="89.8,357.5 109.8,349.6 110.3,350.6 90.3,358.6" fill="#999" stroke="none" stroke-width="1" stroke-linejoin="round" opacity="0.5"/><polygon points="86.3,338.3 101.5,334.4 109.3,349 89.3,356.9" fill="#ffffff" stroke="#3a3a3a" stroke-width="1" stroke-linejoin="round" /><polygon points="98.5,344.7 105.2,341.5 109.3,349 101,352.3" fill="#a89878" stroke="#5a4c38" stroke-width="0.5" stroke-linejoin="round" /><circle cx="86.6" cy="338.5" r="1" fill="#2aa090" stroke="none" stroke-width="1" /><line x1="97.5" y1="344.5" x2="92" y2="340.5" stroke="#e01a1a" stroke-width="2.2" /><polygon points="88.6,338.8 95,338.8 91.3,343.6" fill="#e01a1a" stroke="none" stroke-width="1" stroke-linejoin="round" /><path d="M140.5 338.3 C131 331 118 336 117.5 346.5 C117.5 351 119.5 354 122.5 357" fill="none" stroke="#000" stroke-width="1.9" stroke-linecap="round" stroke-linejoin="round" /><path d="M136 342 C131 339 126 341 126 346 C126 348 127 349 128.5 350.5" fill="none" stroke="#000" stroke-width="1.7" stroke-linecap="round" stroke-linejoin="round" /><polygon points="121,335.5 130,337.5 126.5,339.5 131.5,343 129,344.5 124.5,341 123,344" fill="#e01a1a" stroke="#a01010" stroke-width="0.4" stroke-linejoin="round" /><polygon points="129,341 134,342 131,345.5" fill="#e01a1a" stroke="none" stroke-width="1" stroke-linejoin="round" /><polygon points="99,386 108,382 110,385 101,389" fill="#999" stroke="none" stroke-width="1" stroke-linejoin="round" opacity="0.5"/><polygon points="95.6,383 97.8,386.3 87.8,391.8 86.3,388.5" fill="#e8c818" stroke="#5a4a00" stroke-width="0.6" stroke-linejoin="round" /><line x1="94" y1="384.2" x2="95" y2="386" stroke="#6a5a00" stroke-width="0.5" /><line x1="91.8" y1="385.45" x2="92.8" y2="387.25" stroke="#6a5a00" stroke-width="0.5" /><line x1="89.6" y1="386.7" x2="90.6" y2="388.5" stroke="#6a5a00" stroke-width="0.5" /><line x1="87.4" y1="387.95" x2="88.4" y2="389.75" stroke="#6a5a00" stroke-width="0.5" /><polygon points="93.2,374 96.5,370.8 106,370 108,372 108,381 99,386 94.5,382.5" fill="#5a5a5a" stroke="#2a2a2a" stroke-width="0.7" stroke-linejoin="round" /><ellipse cx="102.9" cy="377.6" rx="3.4" ry="4.8" fill="#f0c818" stroke="#6a5a00" stroke-width="0.7" transform="rotate(12 102.9 377.6)"/><ellipse cx="94.6" cy="376.6" rx="1.6" ry="2.6" fill="#d8b010" stroke="none" stroke-width="1" /><line x1="119" y1="386.4" x2="132.7" y2="372.7" stroke="#000" stroke-width="1.1" /><line x1="131.3" y1="371.8" x2="139.6" y2="381.5" stroke="#000" stroke-width="1.4" /><line x1="120" y1="383" x2="128.8" y2="392.3" stroke="#000" stroke-width="1.4" /><path d="M130.5 370.5 L135 376.5 M134.5 370.8 L131.5 377" fill="none" stroke="#000" stroke-width="1.2" stroke-linecap="round" stroke-linejoin="round" /><path d="M118 382.5 L123 388 M122.5 382 L119 388.5" fill="none" stroke="#000" stroke-width="1.2" stroke-linecap="round" stroke-linejoin="round" /><text x="119.5" y="379.5" font-size="9.5" font-family="Liberation Sans, DejaVu Sans, sans-serif" font-weight="bold">3</text><polygon points="108.5,406 94,424 93,423 107.5,404" fill="#999" stroke="none" stroke-width="1" stroke-linejoin="round" opacity="0.45"/><path d="M107.8 401 L92.2 422.5 C85 418 83.5 410 88.5 404.5 C93.5 399.5 101 398.5 107.8 401 Z" fill="#f0c81c" stroke="#7a6400" stroke-width="0.8" stroke-linecap="round" stroke-linejoin="round" /><path d="M103.5 403.5 L93.3 417.5 C89.3 414 88.8 409.5 92 406.5 C95 403.5 99.5 402.8 103.5 403.5 Z" fill="#f0f0f0" stroke="#7a6400" stroke-width="0.6" stroke-linecap="round" stroke-linejoin="round" /><line x1="106" y1="402.5" x2="92" y2="420.5" stroke="#fae060" stroke-width="0.8" /><rect x="122.5" y="412" width="18" height="2.5" fill="#999" stroke="none" stroke-width="1" opacity="0.5"/><rect x="120.2" y="402.2" width="19.4" height="9.2" fill="#ffffff" stroke="#000" stroke-width="1.2" /><text x="122" y="410" font-size="7.6" font-family="Liberation Sans, DejaVu Sans, sans-serif" font-weight="bold" textLength="16" lengthAdjust="spacingAndGlyphs">ABC</text><line x1="120.5" y1="411" x2="120.5" y2="420" stroke="#000" stroke-width="1.1" /><polygon points="118.3,419 122.7,419 120.5,424" fill="#000" stroke="none" stroke-width="1" stroke-linejoin="round" /><line x1="87.5" y1="449.5" x2="104" y2="441" stroke="#1aa020" stroke-width="2.6" /><polygon points="107.5,439.3 104.589,444.599 101.501,438.541" fill="#1aa020" stroke="none" stroke-width="1" stroke-linejoin="round" /><line x1="87.5" y1="449.5" x2="104" y2="441" stroke="#085008" stroke-width="0.5" stroke-dasharray="1 1.5"/><line x1="90" y1="440.2" x2="105" y2="450.5" stroke="#d01818" stroke-width="2.6" /><polygon points="109.5,453.6 102.513,453.229 106.539,447.26" fill="#d01818" stroke="none" stroke-width="1" stroke-linejoin="round" /><line x1="97" y1="436" x2="97" y2="453.5" stroke="#1428c8" stroke-width="2.8" /><polygon points="97,429.6 101,436.6 93,436.6" fill="#1428c8" stroke="none" stroke-width="1" stroke-linejoin="round" /><polygon points="133,440 139,437 138,450 134,452" fill="#aaa" stroke="none" stroke-width="1" stroke-linejoin="round" opacity="0.5"/><text x="116.5" y="453.5" font-size="31" font-family="Liberation Serif, DejaVu Serif, serif" font-weight="bold" fill="#4a3c2c" textLength="22" lengthAdjust="spacingAndGlyphs" transform="translate(1.3,0.8)">A</text><text x="116.5" y="453.5" font-size="31" font-family="Liberation Serif, DejaVu Serif, serif" font-weight="bold" fill="#a8987a" stroke="#3a3024" stroke-width="0.8" textLength="22" lengthAdjust="spacingAndGlyphs">A</text><path d="M88 474.5 C92 470.5 104 472 108.5 478.5" fill="none" stroke="#2a3a5a" stroke-width="2" stroke-linecap="round" stroke-linejoin="round" /><path d="M93.5 467.5 L97 473" fill="none" stroke="#2a3a5a" stroke-width="2" stroke-linecap="round" stroke-linejoin="round" /><path d="M101 468.5 C106.5 473 105.5 484 99 488.5" fill="none" stroke="#2a78e0" stroke-width="3.8" stroke-linecap="round" stroke-linejoin="round" /><polygon points="99,465.5 107.5,471.5 98.5,474" fill="#2a78e0" stroke="#1a4aa0" stroke-width="0.4" stroke-linejoin="round" /><path d="M87.8 476.5 C88.5 484 94 488.5 99.5 488" fill="none" stroke="#2a78e0" stroke-width="3.4" stroke-linecap="round" stroke-linejoin="round" /><path d="M88.5 476.5 C92 478 96 480.5 100 483" fill="none" stroke="#2a78e0" stroke-width="3.6" stroke-linecap="round" stroke-linejoin="round" /><polygon points="105,486.5 96.5,486 100.5,479.5" fill="#2a78e0" stroke="#1a4aa0" stroke-width="0.4" stroke-linejoin="round" /><path d="M108.5 478.5 C109 481.5 108 484 106.5 485.5" fill="none" stroke="#1a3a7a" stroke-width="2" stroke-linecap="round" stroke-linejoin="round" /><path d="M93.5 487 C95.5 489.5 98.5 490 101 489" fill="none" stroke="#1a3a7a" stroke-width="1.8" stroke-linecap="round" stroke-linejoin="round" /><path d="M91 481 L95 485" fill="none" stroke="#bcd8ff" stroke-width="1.2" stroke-linecap="round" stroke-linejoin="round" /><path d="M118 484.5 C120 481 121 476 123.5 472 C125 470 127 470 127 472 L126.5 474 C128 470 130 467 131.5 467 C133 467 133 469 132.5 470.5 C134 468 135.5 467 136.5 468 C137.5 469 137 471 136 472.5 C137.5 471 139 470.5 139.5 471.5 C140 473 137 476 135 479 C134 480.5 133 481.5 133.5 482 C135 481 138 480 139.5 481 C140.5 482 139 483 137 483.5 C133 484.5 128 487 124.5 489 Z" fill="#ffffff" stroke="#111" stroke-width="1.1" stroke-linecap="round" stroke-linejoin="round" /><path d="M118 484.5 L124.5 489" fill="none" stroke="#f0f0f0" stroke-width="1.6" stroke-linecap="round" stroke-linejoin="round" /><path d="M129 473.5 L131.3 469 M132.5 474 L135.3 469.8 M135 476 L138 472.3" fill="none" stroke="#111" stroke-width="1" stroke-linecap="round" stroke-linejoin="round" /><ellipse cx="95.2" cy="507.5" rx="7.2" ry="2.5" fill="#888" stroke="none" stroke-width="1" opacity="0.35"/><line x1="98.8099" y1="507.862" x2="107" y2="516.5" stroke="#111" stroke-width="3.2" stroke-linecap="round"/><circle cx="94.2" cy="503" r="6.2" fill="#9fc0e4" stroke="#26343e" stroke-width="2" /><path d="M90.79 502.38 A3.72 3.72 0 0 1 94.82 499.28" fill="none" stroke="#dcecfa" stroke-width="1.1" stroke-linecap="round" stroke-linejoin="round" /><polygon points="118.6,496.6 124,497 119.5,501.5" fill="#4a88e0" stroke="#2a5ab0" stroke-width="0.4" stroke-linejoin="round" /><polygon points="135.9,496 130.8,497 134.9,501" fill="#4a88e0" stroke="#2a5ab0" stroke-width="0.4" stroke-linejoin="round" /><polygon points="117.6,513.2 119,506.8 124.8,511.4" fill="#4a88e0" stroke="#2a5ab0" stroke-width="0.4" stroke-linejoin="round" /><polygon points="137.8,512.4 133.2,506.8 131.4,511.6" fill="#4a88e0" stroke="#2a5ab0" stroke-width="0.4" stroke-linejoin="round" /><ellipse cx="128.9" cy="508.9" rx="6.4" ry="2.5" fill="#888" stroke="none" stroke-width="1" opacity="0.35"/><line x1="131.746" y1="508.874" x2="138.3" y2="516.5" stroke="#111" stroke-width="3.2" stroke-linecap="round"/><circle cx="127.9" cy="504.4" r="5.4" fill="#9fc0e4" stroke="#26343e" stroke-width="2" /><path d="M124.93 503.86 A3.24 3.24 0 0 1 128.44 501.16" fill="none" stroke="#dcecfa" stroke-width="1.1" stroke-linecap="round" stroke-linejoin="round" /><ellipse cx="93.7" cy="536.7" rx="7" ry="2.5" fill="#888" stroke="none" stroke-width="1" opacity="0.35"/><line x1="97.1384" y1="536.949" x2="107" y2="547.5" stroke="#111" stroke-width="3.2" stroke-linecap="round"/><circle cx="92.7" cy="532.2" r="6" fill="#9fc0e4" stroke="#26343e" stroke-width="2" /><path d="M89.4 531.6 A3.6 3.6 0 0 1 93.3 528.6" fill="none" stroke="#dcecfa" stroke-width="1.1" stroke-linecap="round" stroke-linejoin="round" /><polygon points="94,545 97.5,531.5 101,535 107,532 110,536 107,543 100,545.5 96.5,543" fill="#2a72e0" stroke="#123a80" stroke-width="0.8" stroke-linejoin="round" /><polygon points="100,545.5 103.5,543 108.5,548.5 105.5,550.5" fill="#111" stroke="none" stroke-width="1" stroke-linejoin="round" /><path d="M99 538 L105 536" fill="none" stroke="#7ab0ff" stroke-width="1.2" stroke-linecap="round" stroke-linejoin="round" /><ellipse cx="135.7" cy="536.7" rx="7" ry="2.5" fill="#888" stroke="none" stroke-width="1" opacity="0.35"/><line x1="130.165" y1="536.857" x2="119.8" y2="547.5" stroke="#111" stroke-width="3.2" stroke-linecap="round"/><circle cx="134.7" cy="532.2" r="6" fill="#9fc0e4" stroke="#26343e" stroke-width="2" /><path d="M131.4 531.6 A3.6 3.6 0 0 1 135.3 528.6" fill="none" stroke="#dcecfa" stroke-width="1.1" stroke-linecap="round" stroke-linejoin="round" /><polygon points="133,545 129.5,531.5 126,535 120,532 117,536 120,543 127,545.5 130.5,543" fill="#2a72e0" stroke="#123a80" stroke-width="0.8" stroke-linejoin="round" /><polygon points="127,545.5 123.5,543 118.5,548.5 121.5,550.5" fill="#111" stroke="none" stroke-width="1" stroke-linejoin="round" /><path d="M128 538 L122 536" fill="none" stroke="#7ab0ff" stroke-width="1.2" stroke-linecap="round" stroke-linejoin="round" /><path d="M91 585.8 L104.4 580.2 M91.6 580.2 L105.2 585.8" fill="none" stroke="#d01020" stroke-width="1.3" stroke-linecap="round" stroke-linejoin="round" /><path d="M97.2 566 C95.3 567 94.4 569.5 94.6 573.5 L95.8 575 L95.6 582.5 L97.8 582.5 L98.3 577 L98.9 577 L99.4 582.5 L101.6 582.5 L101.3 575 L102.6 573.5 C102.8 569.5 101.8 567 99.9 566 Z" fill="#ffffff" stroke="#000" stroke-width="1.4" stroke-linecap="round" stroke-linejoin="round" /><circle cx="98.5" cy="564.2" r="1.5" fill="#fff" stroke="#000" stroke-width="1.1" /><path d="M98.5 561.3 L98.5 562.8" fill="none" stroke="#000" stroke-width="1" stroke-linecap="round" stroke-linejoin="round" /><path d="M118.5 572 C122 566 132 564.5 139.5 571" fill="none" stroke="#000" stroke-width="1.8" stroke-linecap="round" stroke-linejoin="round" /><path d="M119 573.5 C122 569.5 132 568.5 137.5 574 C133 578.5 123.5 578.5 119 573.5 Z" fill="#f4f4f4" stroke="#222" stroke-width="1" stroke-linecap="round" stroke-linejoin="round" /><circle cx="127.6" cy="573.3" r="3.6" fill="#3a3a3a" stroke="#000" stroke-width="0.6" /><circle cx="127.6" cy="573.3" r="1.6" fill="#000" stroke="none" stroke-width="1" /><circle cx="126.6" cy="572.2" r="0.8" fill="#fff" stroke="none" stroke-width="1" /><path d="M121 579 C125 582.5 133 582.5 138 577" fill="none" stroke="#999" stroke-width="1.4" stroke-linecap="round" stroke-linejoin="round" opacity="0.6"/><path d="M137 573.5 L140.5 575" fill="none" stroke="#444" stroke-width="0.9" stroke-linecap="round" stroke-linejoin="round" /><ellipse cx="93.4" cy="602.8" rx="3.9" ry="6.1" fill="#000" stroke="none" stroke-width="1" transform="rotate(-14 93.4 602.8)"/><rect x="92.8" y="610.6" width="4.8" height="5" fill="#000" stroke="none" stroke-width="1" rx="1.8" transform="rotate(-10 95.2 613)"/><ellipse cx="104.4" cy="598.4" rx="4.3" ry="6.2" fill="#000" stroke="none" stroke-width="1" transform="rotate(10 104.4 598.4)"/><rect x="100.6" y="605.8" width="5" height="4.8" fill="#000" stroke="none" stroke-width="1" rx="1.8" transform="rotate(8 103 608)"/><polygon points="129.5,592.2 141.1,604 129.5,615.8" fill="#000" stroke="none" stroke-width="1" stroke-linejoin="round" /><circle cx="127.7" cy="604" r="8.6" fill="#ffffff" stroke="#000" stroke-width="1.5" /><line x1="115.5" y1="603.8" x2="136.7" y2="603.8" stroke="#000" stroke-width="1.4" /><text x="127.5" y="602.1" font-size="7.6" font-family="Liberation Sans, DejaVu Sans, sans-serif" font-weight="bold" text-anchor="middle">C</text><text x="122" y="609.9" font-size="6.6" font-family="Liberation Sans, DejaVu Sans, sans-serif" font-weight="bold" textLength="11.4" lengthAdjust="spacingAndGlyphs">A-5</text></svg><div class="a" style="left:0;top:760px;width:209px;height:100px;overflow:hidden"><svg width="1280" height="1024" viewBox="0 0 1280 1024" style="left:0;top:-760px"><line x1="145" y1="771.5" x2="209" y2="771.5" stroke="#8c8c8c" stroke-width="1" /><line x1="146" y1="772.5" x2="209" y2="772.5" stroke="#ffffff" stroke-width="1" /><line x1="146" y1="777.5" x2="209" y2="777.5" stroke="#8c8c8c" stroke-width="1" /><line x1="146" y1="778.5" x2="209" y2="778.5" stroke="#ffffff" stroke-width="1" /><line x1="145.5" y1="771" x2="145.5" y2="840" stroke="#8c8c8c" stroke-width="1" /><line x1="146.5" y1="773" x2="146.5" y2="840" stroke="#ffffff" stroke-width="1" /><line x1="145" y1="840.5" x2="209" y2="840.5" stroke="#8c8c8c" stroke-width="1" /><line x1="145" y1="841.5" x2="209" y2="841.5" stroke="#ffffff" stroke-width="1" /><rect x="178" y="780" width="30.5" height="29" fill="#f9f9f9" stroke="none" stroke-width="1" /><line x1="178" y1="780.5" x2="208.5" y2="780.5" stroke="#7c7c7c" stroke-width="1" /><line x1="178.5" y1="780" x2="178.5" y2="809" stroke="#7c7c7c" stroke-width="1" /><line x1="208" y1="781" x2="208" y2="809" stroke="#ffffff" stroke-width="1" /><line x1="179" y1="808.5" x2="208.5" y2="808.5" stroke="#ffffff" stroke-width="1" /><rect x="147.5" y="810" width="30" height="29.5" fill="#f9f9f9" stroke="none" stroke-width="1" /><line x1="147.5" y1="810.5" x2="177.5" y2="810.5" stroke="#7c7c7c" stroke-width="1" /><line x1="148" y1="810" x2="148" y2="839.5" stroke="#7c7c7c" stroke-width="1" /><line x1="177" y1="811" x2="177" y2="839.5" stroke="#ffffff" stroke-width="1" /><line x1="148.5" y1="839" x2="177.5" y2="839" stroke="#ffffff" stroke-width="1" /><polygon points="162.8,782.7 174.4,794.5 162.8,806.3" fill="#000" stroke="none" stroke-width="1" stroke-linejoin="round" /><circle cx="161" cy="794.5" r="8.6" fill="#ffffff" stroke="#000" stroke-width="1.5" /><line x1="148.8" y1="794.3" x2="170" y2="794.3" stroke="#000" stroke-width="1.4" /><text x="160.8" y="792.6" font-size="7.6" font-family="Liberation Sans, DejaVu Sans, sans-serif" font-weight="bold" text-anchor="middle">C</text><text x="155.3" y="800.4" font-size="6.6" font-family="Liberation Sans, DejaVu Sans, sans-serif" font-weight="bold" textLength="11.4" lengthAdjust="spacingAndGlyphs">A-5</text><polygon points="195,786 201,791 201.5,800 197,805 192,803" fill="#8e9490" stroke="none" stroke-width="1" stroke-linejoin="round" /><polygon points="185,790 190.5,785.5 196,790 196,805 185.5,801" fill="#c0c8c4" stroke="none" stroke-width="1" stroke-linejoin="round" /><polygon points="183.5,784.5 198.5,787 197.5,807.5 184.5,802.5" fill="none" stroke="#e04a5a" stroke-width="1.9" stroke-linejoin="round" /><polygon points="159.5,815 167,814 173,823 173,832 166.5,836" fill="#8e9490" stroke="none" stroke-width="1" stroke-linejoin="round" /><polygon points="155,823 161,815 166.5,823 166.5,836 155.5,831.5" fill="#c0c8c4" stroke="#e04a5a" stroke-width="1.8" stroke-linejoin="round" /><path d="M154.5 814.5 L155 823 L155.5 831.5" fill="none" stroke="#e04a5a" stroke-width="1.5" stroke-linecap="round" stroke-linejoin="round" /><path d="M154.5 814.5 L161 815 L167 814" fill="none" stroke="#8ab0b8" stroke-width="1" stroke-linecap="round" stroke-linejoin="round" /><path d="M157.5 835.5 L166.5 838 L168.5 836" fill="none" stroke="#e04a5a" stroke-width="1.2" stroke-linecap="round" stroke-linejoin="round" opacity="0.6"/></svg></div><div class="t" style="left:134.4px;top:945.8px;font-size:11px;">Distance</div><svg width="1280" height="1024" viewBox="0 0 1280 1024" style="left:0;top:0"><line x1="86.5" y1="937" x2="86.5" y2="965" stroke="#ffffff" stroke-width="1" /><line x1="87.5" y1="937" x2="87.5" y2="965" stroke="#a0a0a0" stroke-width="1" /><line x1="85" y1="964.5" x2="88" y2="964.5" stroke="#a0a0a0" stroke-width="1" /><line x1="85" y1="937.5" x2="88" y2="937.5" stroke="#ffffff" stroke-width="1" /><circle cx="95.8" cy="981.6" r="9.3" fill="#f6ead0" stroke="#8a682c" stroke-width="2.2" /><circle cx="95.8" cy="981.6" r="7.6" fill="none" stroke="#d8c090" stroke-width="0.8" /><ellipse cx="95.8" cy="979.3" rx="2.5" ry="3.2" fill="#f4d4c8" stroke="#d09a8a" stroke-width="0.8" /><line x1="95.8" y1="982.6" x2="95.8" y2="987.6" stroke="#d09a8a" stroke-width="1" /><circle cx="124" cy="981.6" r="9.3" fill="#f6ead0" stroke="#8a682c" stroke-width="2.2" /><circle cx="124" cy="981.6" r="7.6" fill="none" stroke="#d8c090" stroke-width="0.8" /><circle cx="124" cy="977" r="1.5" fill="#000" stroke="none" stroke-width="1" /><path d="M121.8 978.8 h4.4 v5 h-1 v5 h-2.4 v-5 h-1 z" fill="#000" stroke="none" stroke-width="1" stroke-linecap="round" stroke-linejoin="round" /><circle cx="151.6" cy="981.6" r="9.3" fill="#f6ead0" stroke="#8a682c" stroke-width="2.2" /><circle cx="151.6" cy="981.6" r="7.6" fill="none" stroke="#d8c090" stroke-width="0.8" /><text x="151.6" y="986" font-size="12.5" font-family="Liberation Sans, DejaVu Sans, sans-serif" text-anchor="middle" fill="#b4a47c">G</text><defs><linearGradient id="og113" x1="0" y1="0" x2="0" y2="1"><stop offset="0" stop-color="#8fc4dc"/><stop offset="0.42" stop-color="#3f8fc0"/><stop offset="0.48" stop-color="#0c4f9c"/><stop offset="0.8" stop-color="#0a5ab0"/><stop offset="1" stop-color="#22b8ee"/></linearGradient></defs><circle cx="113.1" cy="1011" r="20.3" fill="#0c1a26" stroke="none" stroke-width="1" opacity="0.92"/><circle cx="113.1" cy="1011" r="18.4" fill="url(#og113)" stroke="#4a7aa0" stroke-width="0.7" /><path d="M103.9 998.5 c3.2 -2.3 6.5 -2.3 9.6 -0.3 l-1.6 8.2 c-3 -1.6 -6 -1.4 -9.6 0.4 z" fill="#f2622c" stroke="none" stroke-width="1" stroke-linecap="round" stroke-linejoin="round" /><path d="M114.9 999.8 c3 1.6 6 1.4 9.2 -0.6 l-1.2 8.6 c-3 2 -6.4 2.2 -9.6 0.4 z" fill="#84c040" stroke="none" stroke-width="1" stroke-linecap="round" stroke-linejoin="round" /><path d="M100.5 1009.4 c3.4 -1.9 6.6 -2 9.8 -0.3 l-1.6 8.6 c-3 -1.6 -6.2 -1.4 -9.8 0.6 z" fill="#3aa4e6" stroke="none" stroke-width="1" stroke-linecap="round" stroke-linejoin="round" /><path d="M112.1 1010.6 c3 1.6 6 1.5 9.4 -0.5 l-1.6 8.4 c-3 2 -6.2 2.2 -9.4 0.5 z" fill="#f8c424" stroke="none" stroke-width="1" stroke-linecap="round" stroke-linejoin="round" /><path d="M98.1 1002 A17 15 0 0 1 128.1 1002" fill="none" stroke="#d4ecfa" stroke-width="1.2" stroke-linecap="round" stroke-linejoin="round" opacity="0.55"/><rect x="148" y="999" width="1.7" height="1.7" fill="#2a0c14" stroke="none" stroke-width="1" /><rect x="148.9" y="999.9" width="1" height="1" fill="#b88a94" stroke="none" stroke-width="1" /><rect x="151" y="999" width="1.7" height="1.7" fill="#2a0c14" stroke="none" stroke-width="1" /><rect x="151.9" y="999.9" width="1" height="1" fill="#b88a94" stroke="none" stroke-width="1" /><rect x="154" y="999" width="1.7" height="1.7" fill="#2a0c14" stroke="none" stroke-width="1" /><rect x="154.9" y="999.9" width="1" height="1" fill="#b88a94" stroke="none" stroke-width="1" /><rect x="148" y="1003" width="1.7" height="1.7" fill="#2a0c14" stroke="none" stroke-width="1" /><rect x="148.9" y="1003.9" width="1" height="1" fill="#b88a94" stroke="none" stroke-width="1" /><rect x="151" y="1003" width="1.7" height="1.7" fill="#2a0c14" stroke="none" stroke-width="1" /><rect x="151.9" y="1003.9" width="1" height="1" fill="#b88a94" stroke="none" stroke-width="1" /><rect x="154" y="1003" width="1.7" height="1.7" fill="#2a0c14" stroke="none" stroke-width="1" /><rect x="154.9" y="1003.9" width="1" height="1" fill="#b88a94" stroke="none" stroke-width="1" /><rect x="148" y="1007" width="1.7" height="1.7" fill="#2a0c14" stroke="none" stroke-width="1" /><rect x="148.9" y="1007.9" width="1" height="1" fill="#b88a94" stroke="none" stroke-width="1" /><rect x="151" y="1007" width="1.7" height="1.7" fill="#2a0c14" stroke="none" stroke-width="1" /><rect x="151.9" y="1007.9" width="1" height="1" fill="#b88a94" stroke="none" stroke-width="1" /><rect x="154" y="1007" width="1.7" height="1.7" fill="#2a0c14" stroke="none" stroke-width="1" /><rect x="154.9" y="1007.9" width="1" height="1" fill="#b88a94" stroke="none" stroke-width="1" /><rect x="148" y="1011" width="1.7" height="1.7" fill="#2a0c14" stroke="none" stroke-width="1" /><rect x="148.9" y="1011.9" width="1" height="1" fill="#b88a94" stroke="none" stroke-width="1" /><rect x="151" y="1011" width="1.7" height="1.7" fill="#2a0c14" stroke="none" stroke-width="1" /><rect x="151.9" y="1011.9" width="1" height="1" fill="#b88a94" stroke="none" stroke-width="1" /><rect x="154" y="1011" width="1.7" height="1.7" fill="#2a0c14" stroke="none" stroke-width="1" /><rect x="154.9" y="1011.9" width="1" height="1" fill="#b88a94" stroke="none" stroke-width="1" /><rect x="148" y="1015" width="1.7" height="1.7" fill="#2a0c14" stroke="none" stroke-width="1" /><rect x="148.9" y="1015.9" width="1" height="1" fill="#b88a94" stroke="none" stroke-width="1" /><rect x="151" y="1015" width="1.7" height="1.7" fill="#2a0c14" stroke="none" stroke-width="1" /><rect x="151.9" y="1015.9" width="1" height="1" fill="#b88a94" stroke="none" stroke-width="1" /><rect x="154" y="1015" width="1.7" height="1.7" fill="#2a0c14" stroke="none" stroke-width="1" /><rect x="154.9" y="1015.9" width="1" height="1" fill="#b88a94" stroke="none" stroke-width="1" /><rect x="148" y="1019" width="1.7" height="1.7" fill="#2a0c14" stroke="none" stroke-width="1" /><rect x="148.9" y="1019.9" width="1" height="1" fill="#b88a94" stroke="none" stroke-width="1" /><rect x="151" y="1019" width="1.7" height="1.7" fill="#2a0c14" stroke="none" stroke-width="1" /><rect x="151.9" y="1019.9" width="1" height="1" fill="#b88a94" stroke="none" stroke-width="1" /><rect x="154" y="1019" width="1.7" height="1.7" fill="#2a0c14" stroke="none" stroke-width="1" /><rect x="154.9" y="1019.9" width="1" height="1" fill="#b88a94" stroke="none" stroke-width="1" /></svg></div></div>
</body></html>
